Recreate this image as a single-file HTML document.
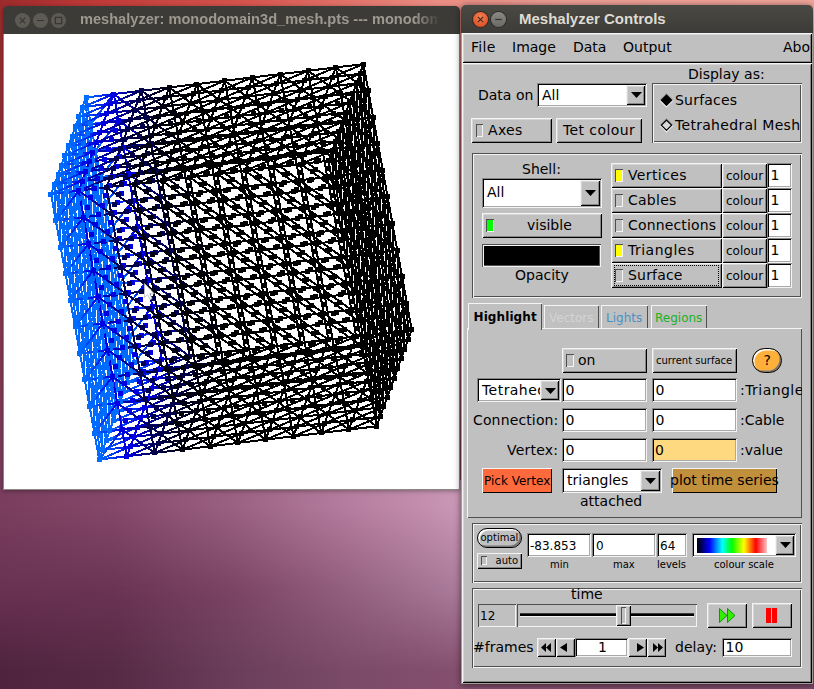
<!DOCTYPE html><html><head><meta charset="utf-8"><title>Meshalyzer</title><style>
html,body{margin:0;padding:0}
body{width:814px;height:689px;overflow:hidden;position:relative;font-family:"DejaVu Sans","Liberation Sans",sans-serif;font-size:14px;
background:linear-gradient(90deg,#9c2a2c 0px,#c03a38 100px,#d4554e 250px,#ea8d83 440px,#f0a097 560px,#f4a69a 814px)}
div,span,svg{position:absolute;box-sizing:border-box}
.t{white-space:nowrap;line-height:normal}
.a{overflow:visible}
.up{background:#c0c0c0;box-shadow:inset 1px 1px 0 #f4f4f4,inset -1px -1px 0 #000,inset 2px 2px 0 #d5d5d5,inset -2px -2px 0 #878787}
.dn{background:#fff;box-shadow:inset 1px 1px 0 #878787,inset -1px -1px 0 #f4f4f4,inset 2px 2px 0 #000,inset -2px -2px 0 #a9a9a9}
.eng{box-shadow:inset 1px 1px 0 #4f4f4f,inset -1px -1px 0 #f4f4f4,inset 2px 2px 0 #f4f4f4,inset -2px -2px 0 #4f4f4f}
.tup{background:#c0c0c0;box-shadow:inset 1px 1px 0 #f4f4f4,inset -1px -1px 0 #4f4f4f}
.tdn{background:#c0c0c0;box-shadow:inset 1px 1px 0 #4f4f4f,inset -1px -1px 0 #f4f4f4}
.clip{overflow:hidden}
.tb{background:#3c3b37;border-radius:5px 5px 0 0}
.tt{font-family:"Liberation Sans","DejaVu Sans",sans-serif;font-weight:bold;font-size:15px;white-space:nowrap;line-height:17px}
.cb{border-radius:50%}
</style></head><body><div style="left:0;top:0;width:814px;height:689px;background:linear-gradient(180deg,rgba(142,58,78,0) 0px,rgba(142,58,78,0) 10px,rgba(142,58,78,.9) 250px,#7a3d5e 490px,#4f233e 689px)"></div>
<div style="left:0;top:480px;width:461px;height:209px;background:linear-gradient(90deg,#4f233e 0%,#562a45 25%,#6a3e5b 50%,#7a4a68 75%,#85506f 100%)"></div>
<div style="left:0;top:480px;width:461px;height:209px;background:linear-gradient(90deg,#693253 0%,#6a3454 25%,#7a4464 50%,#93607f 75%,#ab7c9b 100%);-webkit-mask-image:linear-gradient(180deg,#000 110px,transparent 192px);mask-image:linear-gradient(180deg,#000 110px,transparent 192px)"></div>
<div style="left:0;top:480px;width:461px;height:209px;background:linear-gradient(90deg,#7a3d5e 0%,#85486a 25%,#9a6082 50%,#b47c9e 75%,#cb98b7 100%);-webkit-mask-image:linear-gradient(180deg,#000 27px,transparent 110px);mask-image:linear-gradient(180deg,#000 27px,transparent 110px)"></div>
<div style="left:461px;top:480px;width:353px;height:209px;background:linear-gradient(90deg,#85506f,#7d4a69)"></div>
<div style="left:3px;top:6px;width:457px;height:484px;border-radius:5px 5px 0 0;box-shadow:0 1px 4px rgba(0,0,0,.35)"></div>
<div class="tb" style="left:3px;top:6px;width:457px;height:28px;"></div>
<div style="left:3px;top:34px;width:457px;height:456px;background:#fff;border:1px solid #8a8a84;border-top:none"></div>
<div class="cb" style="left:15px;top:13px;width:15px;height:15px;background:#5d5a54"></div>
<div class="cb" style="left:33px;top:13px;width:15px;height:15px;background:#5d5a54"></div>
<div class="cb" style="left:51px;top:13px;width:15px;height:15px;background:#5d5a54"></div>
<svg class="a" style="left:0;top:0" width="80" height="34"><g stroke="#35342f" stroke-width="1.15" fill="none"><path d="M19.7 17.7l5.6 5.6M25.3 17.7l-5.6 5.6M37.2 20.5h6.6"/><rect x="55.3" y="17.3" width="6.4" height="6.4"/></g></svg>
<div class="tt clip" style="font-size:14.6px;left:80px;top:11px;width:362px;height:20px;color:#9d998f;-webkit-mask-image:linear-gradient(90deg,#000 335px,transparent 360px);mask-image:linear-gradient(90deg,#000 335px,transparent 360px)">meshalyzer: monodomain3d_mesh.pts --- monodomain3d</div>
<svg style="left:0;top:0" width="460" height="490"><g fill="none" stroke-width="2" shape-rendering="crispEdges"><path d="M65.5 273.7L64.1 237.5M81.6 189.2L86.5 215.7M99.2 459.6L97.9 423.4M54.5 184.3L58.0 174.7M118.9 365.4L123.7 392.0M123.7 392.0L127.2 382.3M77.3 280.9L76.0 244.7M90.0 206.1L93.5 196.4M65.0 155.4L68.5 145.7M89.1 288.2L93.9 314.7M127.2 382.3L130.7 372.7M120.2 401.6L118.9 365.4M93.5 196.4L98.3 223.0M64.1 237.5L62.8 201.2M96.1 268.8L99.6 259.2M87.8 251.9L92.6 278.5M79.9 353.4L84.7 379.9M111.9 384.7L110.6 348.5M80.3 152.9L79.0 116.7M114.1 338.9L118.9 365.4M92.6 278.5L91.3 242.3M90.8 124.0L95.6 150.5M106.2 440.3L104.9 404.1M83.8 143.3L82.5 107.1M102.2 331.6L105.7 322.0M94.8 232.6L93.5 196.4M107.1 358.2L105.7 322.0M83.0 225.4L87.8 251.9M93.1 396.8L91.7 360.6M116.2 293.0L114.9 256.8M125.9 346.1L129.4 336.4M84.3 261.6L89.1 288.2M86.0 97.4L90.8 124.0M103.1 249.5L106.6 239.9M98.7 341.3L102.2 331.6M85.1 179.5L88.6 169.8M109.7 430.6L113.2 421.0M115.4 375.1L114.1 338.9M97.4 305.1L100.9 295.4M83.4 343.7L86.9 334.0M118.9 365.4L122.4 355.8M85.6 297.8L90.4 324.4M88.6 169.8L92.1 160.2M75.1 326.8L79.9 353.4M74.6 208.5L78.1 198.8M79.5 235.0L84.3 261.6M79.9 353.4L83.4 343.7M102.7 449.9L101.4 413.7M78.6 317.1L82.1 307.5M55.8 220.6L54.5 184.3M100.1 377.5L98.7 341.3M87.8 251.9L86.5 215.7M101.4 413.7L106.2 440.3M72.5 254.4L76.0 244.7M111.4 266.4L110.1 230.2M83.8 143.3L88.6 169.8M111.9 384.7L116.7 411.3M112.7 302.6L116.2 293.0M85.1 179.5L83.8 143.3M80.8 271.3L85.6 297.8M118.9 365.4L117.6 329.2M99.6 259.2L104.4 285.7M114.9 256.8L119.7 283.3M113.2 421.0L111.9 384.7M104.4 285.7L109.2 312.3M89.1 288.2L92.6 278.5M101.8 213.3L105.3 203.6M75.5 126.4L79.0 116.7M83.4 343.7L88.2 370.3M62.8 201.2L67.6 227.8M98.3 223.0L101.8 213.3M106.6 239.9L105.3 203.6M93.5 196.4L97.0 186.7M107.1 358.2L111.9 384.7M76.0 244.7L80.8 271.3M114.1 338.9L112.7 302.6M115.4 375.1L120.2 401.6M75.1 326.8L78.6 317.1M100.9 295.4L104.4 285.7M69.0 264.0L72.5 254.4M104.4 285.7L107.9 276.1M116.2 293.0L121.1 319.5M109.2 312.3L114.1 338.9M102.2 331.6L107.1 358.2M103.6 367.8L107.1 358.2M69.8 181.9L73.3 172.3M65.5 273.7L69.0 264.0M117.6 329.2L116.2 293.0M80.8 271.3L84.3 261.6M97.9 423.4L96.6 387.2M85.6 297.8L84.3 261.6M90.4 324.4L95.2 350.9M84.7 379.9L89.6 406.5M97.0 186.7L95.6 150.5M92.1 160.2L95.6 150.5M96.6 387.2L100.1 377.5M62.8 201.2L66.3 191.6M79.5 235.0L83.0 225.4M58.0 174.7L61.5 165.0M111.4 266.4L116.2 293.0M72.5 254.4L77.3 280.9M104.9 404.1L109.7 430.6M97.4 305.1L102.2 331.6M76.0 244.7L79.5 235.0M100.9 295.4L99.6 259.2M94.4 433.0L99.2 459.6M60.6 247.1L65.5 273.7M68.5 145.7L72.0 136.0M92.6 278.5L96.1 268.8M100.5 177.1L105.3 203.6M123.7 392.0L122.4 355.8M90.0 206.1L88.6 169.8M99.6 259.2L103.1 249.5M73.3 172.3L72.0 136.0M87.3 133.6L90.8 124.0M106.6 239.9L111.4 266.4M73.8 290.6L78.6 317.1M108.4 394.4L107.1 358.2M86.9 334.0L85.6 297.8M122.4 355.8L125.9 346.1M75.5 126.4L80.3 152.9M121.1 319.5L124.6 309.9M91.3 242.3L94.8 232.6M107.9 276.1L112.7 302.6M127.2 382.3L125.9 346.1M90.4 324.4L93.9 314.7M76.8 162.6L81.6 189.2M96.1 268.8L94.8 232.6M84.7 379.9L88.2 370.3M89.6 406.5L88.2 370.3M95.2 350.9L100.1 377.5M110.6 348.5L115.4 375.1M96.6 387.2L95.2 350.9M109.2 312.3L112.7 302.6M67.6 227.8L72.5 254.4M79.0 116.7L82.5 107.1M94.4 433.0L97.9 423.4M102.2 331.6L100.9 295.4M76.0 244.7L74.6 208.5M69.0 264.0L73.8 290.6M71.1 218.1L74.6 208.5M117.6 329.2L122.4 355.8M78.1 198.8L81.6 189.2M82.5 107.1L86.0 97.4M101.8 213.3L106.6 239.9M125.9 346.1L124.6 309.9M87.3 133.6L86.0 97.4M93.9 314.7L97.4 305.1M98.7 341.3L97.4 305.1M103.1 249.5L101.8 213.3M104.9 404.1L108.4 394.4M84.7 379.9L83.4 343.7M66.3 191.6L69.8 181.9M82.1 307.5L86.9 334.0M81.6 189.2L85.1 179.5M73.3 172.3L78.1 198.8M109.7 430.6L108.4 394.4M83.4 343.7L82.1 307.5M70.3 300.2L75.1 326.8M97.0 186.7L101.8 213.3M86.5 215.7L90.0 206.1M59.3 210.9L62.8 201.2M96.6 387.2L101.4 413.7M108.4 394.4L113.2 421.0M130.7 372.7L134.2 363.0M73.8 290.6L77.3 280.9M105.7 322.0L104.4 285.7M95.2 350.9L98.7 341.3M78.6 317.1L77.3 280.9M102.7 449.9L106.2 440.3M65.5 273.7L70.3 300.2M97.4 305.1L96.1 268.8M93.9 314.7L92.6 278.5M88.6 169.8L87.3 133.6M74.6 208.5L73.3 172.3M58.0 174.7L62.8 201.2M79.9 353.4L78.6 317.1M84.3 261.6L87.8 251.9M101.8 213.3L100.5 177.1M89.1 288.2L87.8 251.9M101.4 413.7L104.9 404.1M59.3 210.9L64.1 237.5M130.7 372.7L129.4 336.4M98.7 341.3L103.6 367.8M82.1 307.5L85.6 297.8M73.8 290.6L72.5 254.4M125.9 346.1L130.7 372.7M88.2 370.3L91.7 360.6M94.8 232.6L99.6 259.2M70.3 300.2L73.8 290.6M75.1 326.8L73.8 290.6M116.7 411.3L120.2 401.6M64.1 237.5L67.6 227.8M98.3 223.0L97.0 186.7M66.3 191.6L71.1 218.1M69.0 264.0L67.6 227.8M84.3 261.6L83.0 225.4M55.8 220.6L60.6 247.1M100.1 377.5L104.9 404.1M71.1 218.1L76.0 244.7M80.3 152.9L83.8 143.3M99.2 459.6L102.7 449.9M101.4 413.7L100.1 377.5M88.6 169.8L93.5 196.4M103.6 367.8L102.2 331.6M69.8 181.9L68.5 145.7M74.6 208.5L79.5 235.0M80.8 271.3L79.5 235.0M78.1 198.8L83.0 225.4M120.2 401.6L123.7 392.0M91.7 360.6L95.2 350.9M93.1 396.8L96.6 387.2M111.9 384.7L115.4 375.1M104.4 285.7L103.1 249.5M105.7 322.0L110.6 348.5M72.0 136.0L76.8 162.6M92.1 160.2L90.8 124.0M116.7 411.3L115.4 375.1M106.2 440.3L109.7 430.6M83.8 143.3L87.3 133.6M112.7 302.6L117.6 329.2M115.4 375.1L118.9 365.4M85.1 179.5L90.0 206.1M94.8 232.6L98.3 223.0M107.1 358.2L110.6 348.5M99.6 259.2L98.3 223.0M116.2 293.0L119.7 283.3M110.1 230.2L114.9 256.8M121.1 319.5L119.7 283.3M62.8 201.2L61.5 165.0M88.2 370.3L93.1 396.8M98.3 223.0L103.1 249.5M60.6 247.1L64.1 237.5M55.8 220.6L59.3 210.9M100.1 377.5L103.6 367.8M109.2 312.3L107.9 276.1M89.6 406.5L93.1 396.8M64.1 237.5L69.0 264.0M103.6 367.8L108.4 394.4M111.4 266.4L114.9 256.8M97.9 423.4L102.7 449.9M122.4 355.8L121.1 319.5M71.1 218.1L69.8 181.9M86.5 215.7L85.1 179.5M91.3 242.3L90.0 206.1M90.4 324.4L89.1 288.2M78.1 198.8L76.8 162.6M100.9 295.4L105.7 322.0M105.3 203.6L110.1 230.2M80.3 152.9L85.1 179.5M67.6 227.8L71.1 218.1M124.6 309.9L129.4 336.4M61.5 165.0L65.0 155.4M87.8 251.9L91.3 242.3M72.5 254.4L71.1 218.1M77.3 280.9L82.1 307.5M104.9 404.1L103.6 367.8M93.1 396.8L97.9 423.4M51.0 194.0L54.5 184.3M54.5 184.3L59.3 210.9M69.8 181.9L74.6 208.5M94.4 433.0L93.1 396.8M60.6 247.1L59.3 210.9M59.3 210.9L58.0 174.7M91.7 360.6L96.6 387.2M96.1 268.8L100.9 295.4M83.0 225.4L86.5 215.7M113.2 421.0L116.7 411.3M119.7 283.3L124.6 309.9M93.5 196.4L92.1 160.2M107.9 276.1L111.4 266.4M106.6 239.9L110.1 230.2M65.0 155.4L69.8 181.9M76.8 162.6L80.3 152.9M68.5 145.7L73.3 172.3M112.7 302.6L111.4 266.4M92.6 278.5L97.4 305.1M95.2 350.9L93.9 314.7M66.3 191.6L65.0 155.4M81.6 189.2L80.3 152.9M87.3 133.6L92.1 160.2M110.6 348.5L114.1 338.9M105.7 322.0L109.2 312.3M67.6 227.8L66.3 191.6M72.0 136.0L75.5 126.4M114.1 338.9L117.6 329.2M95.6 150.5L100.5 177.1M121.1 319.5L125.9 346.1M92.1 160.2L97.0 186.7M90.0 206.1L94.8 232.6M129.4 336.4L134.2 363.0M122.4 355.8L127.2 382.3M86.9 334.0L91.7 360.6M91.3 242.3L96.1 268.8M103.1 249.5L107.9 276.1M97.9 423.4L101.4 413.7M83.0 225.4L81.6 189.2M97.0 186.7L100.5 177.1M89.6 406.5L94.4 433.0M77.3 280.9L80.8 271.3M107.9 276.1L106.6 239.9M82.1 307.5L80.8 271.3M76.8 162.6L75.5 126.4M79.0 116.7L83.8 143.3M82.5 107.1L87.3 133.6M117.6 329.2L121.1 319.5M88.2 370.3L86.9 334.0M70.3 300.2L69.0 264.0M110.6 348.5L109.2 312.3M86.5 215.7L91.3 242.3M85.6 297.8L89.1 288.2M73.3 172.3L76.8 162.6M79.5 235.0L78.1 198.8M108.4 394.4L111.9 384.7M86.9 334.0L90.4 324.4M61.5 165.0L66.3 191.6M78.6 317.1L83.4 343.7M93.9 314.7L98.7 341.3M91.7 360.6L90.4 324.4M51.0 194.0L55.8 220.6" stroke="#006bff"/><path d="M54.5 184.3L61.4 183.5M65.5 273.7L72.4 272.8M114.9 256.8L121.9 255.9M119.7 283.3L125.5 275.8M129.4 336.4L136.3 335.6M120.2 401.6L128.0 398.4M123.7 392.0L131.5 388.7M94.4 433.0L101.3 432.2M95.6 150.5L101.4 143.0M60.6 247.1L67.6 246.3M55.8 220.6L62.8 219.7M99.2 459.6L107.0 456.4M65.0 155.4L72.8 152.1M68.5 145.7L76.3 142.5M84.7 379.9L90.5 372.4M86.0 97.4L92.9 96.6M79.9 353.4L85.7 345.9M102.7 449.9L110.5 446.7M105.3 203.6L111.0 196.2M113.2 421.0L121.0 417.7M124.6 309.9L130.3 302.4M72.0 136.0L79.8 132.8M99.2 459.6L106.1 458.8M127.2 382.3L134.1 381.5M70.3 300.2L76.0 292.8M58.0 174.7L64.9 173.8M68.5 145.7L75.4 144.9M65.5 273.7L71.2 266.2M129.4 336.4L135.1 329.0M99.2 459.6L104.9 452.1M114.9 256.8L120.7 249.3M54.5 184.3L62.3 181.1M82.5 107.1L89.4 106.2M127.2 382.3L135.0 379.1M61.5 165.0L68.4 164.2M89.6 406.5L96.5 405.6M82.5 107.1L90.3 103.8M100.5 177.1L107.4 176.2M51.0 194.0L57.9 193.2M130.7 372.7L137.6 371.8M113.2 421.0L120.1 420.1M102.7 449.9L109.6 449.1M90.8 124.0L96.6 116.5M94.4 433.0L100.1 425.6M60.6 247.1L66.4 239.6M79.0 116.7L86.8 113.5M109.7 430.6L117.5 427.4M110.1 230.2L117.0 229.4M75.5 126.4L83.3 123.1M61.5 165.0L69.3 161.8M51.0 194.0L58.8 190.8M116.7 411.3L123.6 410.5M123.7 392.0L130.6 391.1M120.2 401.6L127.1 400.8M106.2 440.3L113.1 439.4M79.0 116.7L85.9 115.9M65.0 155.4L71.9 154.5M134.2 363.0L141.1 362.2M95.6 150.5L102.6 149.7M116.7 411.3L124.5 408.1M58.0 174.7L65.8 171.4M109.7 430.6L116.6 429.8M106.2 440.3L114.0 437.0M134.2 363.0L139.9 355.5M55.8 220.6L61.6 213.1M84.7 379.9L91.7 379.1M89.6 406.5L95.3 399.0M79.9 353.4L86.9 352.5M75.5 126.4L82.4 125.5M124.6 309.9L131.5 309.0M72.0 136.0L78.9 135.2M100.5 177.1L106.2 169.6M90.8 124.0L97.8 123.1M75.1 326.8L82.0 326.0M105.3 203.6L112.2 202.8M110.1 230.2L115.8 222.7M130.7 372.7L138.5 369.4M119.7 283.3L126.7 282.5M70.3 300.2L77.2 299.4M75.1 326.8L80.8 319.3" stroke="#005efb"/><path d="M61.4 183.5L68.4 182.7M72.4 272.8L79.3 272.0M121.9 255.9L128.8 255.1M125.5 275.8L131.2 268.4M136.3 335.6L143.3 334.8M128.0 398.4L135.8 395.1M131.5 388.7L139.3 385.5M101.3 432.2L108.3 431.4M101.4 143.0L107.1 135.6M67.6 246.3L74.5 245.5M62.8 219.7L69.7 218.9M107.0 456.4L114.8 453.1M72.8 152.1L80.6 148.9M76.3 142.5L84.1 139.2M90.5 372.4L96.2 365.0M92.9 96.6L99.9 95.7M85.7 345.9L91.4 338.4M110.5 446.7L118.3 443.4M111.0 196.2L116.7 188.7M121.0 417.7L128.8 414.5M130.3 302.4L136.0 294.9M79.8 132.8L87.6 129.5M106.1 458.8L113.1 457.9M134.1 381.5L141.1 380.7M76.0 292.8L81.7 285.3M64.9 173.8L71.9 173.0M75.4 144.9L82.4 144.0M71.2 266.2L76.9 258.7M135.1 329.0L140.8 321.5M104.9 452.1L110.7 444.7M120.7 249.3L126.4 241.8M62.3 181.1L70.1 177.8M89.4 106.2L96.4 105.4M135.0 379.1L142.8 375.8M68.4 164.2L75.4 163.4M96.5 405.6L103.4 404.8M90.3 103.8L98.1 100.6M107.4 176.2L114.3 175.4M57.9 193.2L64.9 192.3M137.6 371.8L144.6 371.0M120.1 420.1L127.1 419.3M109.6 449.1L116.6 448.3M96.6 116.5L102.3 109.0M100.1 425.6L105.8 418.1M66.4 239.6L72.1 232.2M86.8 113.5L94.6 110.2M117.5 427.4L125.3 424.1M117.0 229.4L124.0 228.5M83.3 123.1L91.1 119.9M69.3 161.8L77.1 158.5M58.8 190.8L66.6 187.5M123.6 410.5L130.6 409.6M130.6 391.1L137.6 390.3M127.1 400.8L134.1 400.0M113.1 439.4L120.1 438.6M85.9 115.9L92.9 115.1M71.9 154.5L78.9 153.7M141.1 362.2L148.1 361.3M102.6 149.7L109.5 148.9M124.5 408.1L132.3 404.8M65.8 171.4L73.6 168.2M116.6 429.8L123.6 429.0M114.0 437.0L121.8 433.8M139.9 355.5L145.7 348.1M61.6 213.1L67.3 205.6M91.7 379.1L98.6 378.3M95.3 399.0L101.0 391.5M86.9 352.5L93.8 351.7M82.4 125.5L89.4 124.7M131.5 309.0L138.4 308.2M78.9 135.2L85.9 134.4M106.2 169.6L111.9 162.1M97.8 123.1L104.7 122.3M82.0 326.0L89.0 325.1M112.2 202.8L119.2 202.0M115.8 222.7L121.6 215.3M138.5 369.4L146.3 366.2M126.7 282.5L133.6 281.7M77.2 299.4L84.2 298.6M80.8 319.3L86.6 311.9" stroke="#0043f4"/><path d="M68.4 182.7L75.3 181.8M79.3 272.0L86.3 271.2M128.8 255.1L135.7 254.3M131.2 268.4L136.9 260.9M143.3 334.8L150.2 333.9M135.8 395.1L143.6 391.9M139.3 385.5L147.1 382.2M108.3 431.4L115.2 430.5M107.1 135.6L112.8 128.1M74.5 245.5L81.5 244.6M69.7 218.9L76.6 218.1M114.8 453.1L122.6 449.9M80.6 148.9L88.4 145.6M84.1 139.2L91.9 136.0M96.2 365.0L101.9 357.5M99.9 95.7L106.8 94.9M91.4 338.4L97.1 330.9M118.3 443.4L126.1 440.2M116.7 188.7L122.5 181.2M128.8 414.5L136.6 411.2M136.0 294.9L141.8 287.5M87.6 129.5L95.4 126.3M113.1 457.9L120.0 457.1M141.1 380.7L148.0 379.8M81.7 285.3L87.5 277.8M71.9 173.0L78.8 172.2M82.4 144.0L89.3 143.2M76.9 258.7L82.7 251.3M140.8 321.5L146.6 314.0M110.7 444.7L116.4 437.2M126.4 241.8L132.1 234.3M70.1 177.8L77.9 174.6M96.4 105.4L103.3 104.6M142.8 375.8L150.6 372.6M75.4 163.4L82.3 162.5M103.4 404.8L110.4 404.0M98.1 100.6L105.9 97.3M114.3 175.4L121.3 174.6M64.9 192.3L71.8 191.5M144.6 371.0L151.5 370.2M127.1 419.3L134.0 418.5M116.6 448.3L123.5 447.4M102.3 109.0L108.0 101.5M105.8 418.1L111.6 410.6M72.1 232.2L77.8 224.7M94.6 110.2L102.4 107.0M125.3 424.1L133.1 420.9M124.0 228.5L130.9 227.7M91.1 119.9L98.9 116.6M77.1 158.5L84.9 155.3M66.6 187.5L74.4 184.3M130.6 409.6L137.5 408.8M137.6 390.3L144.5 389.5M134.1 400.0L141.0 399.1M120.1 438.6L127.0 437.8M92.9 115.1L99.8 114.2M78.9 153.7L85.8 152.9M148.1 361.3L155.0 360.5M109.5 148.9L116.5 148.0M132.3 404.8L140.1 401.6M73.6 168.2L81.4 164.9M123.6 429.0L130.5 428.1M121.8 433.8L129.6 430.5M145.7 348.1L151.4 340.6M67.3 205.6L73.0 198.1M98.6 378.3L105.6 377.4M101.0 391.5L106.8 384.1M93.8 351.7L100.7 350.9M89.4 124.7L96.3 123.9M138.4 308.2L145.4 307.4M85.9 134.4L92.8 133.5M111.9 162.1L117.7 154.7M104.7 122.3L111.6 121.5M89.0 325.1L95.9 324.3M119.2 202.0L126.1 201.1M121.6 215.3L127.3 207.8M146.3 366.2L154.1 362.9M133.6 281.7L140.6 280.8M84.2 298.6L91.1 297.7M86.6 311.9L92.3 304.4" stroke="#0028ec"/><path d="M75.3 181.8L82.2 181.0M86.3 271.2L93.2 270.4M135.7 254.3L142.7 253.4M136.9 260.9L142.7 253.4M150.2 333.9L157.1 333.1M143.6 391.9L151.4 388.6M147.1 382.2L154.9 379.0M115.2 430.5L122.1 429.7M112.8 128.1L118.6 120.6M81.5 244.6L88.4 243.8M76.6 218.1L83.6 217.2M122.6 449.9L130.4 446.6M88.4 145.6L96.2 142.4M91.9 136.0L99.8 132.7M101.9 357.5L107.7 350.0M106.8 94.9L113.8 94.1M97.1 330.9L102.8 323.5M126.1 440.2L133.9 436.9M122.5 181.2L128.2 173.8M136.6 411.2L144.4 408.0M141.8 287.5L147.5 280.0M95.4 126.3L103.2 123.1M120.0 457.1L127.0 456.3M148.0 379.8L154.9 379.0M87.5 277.8L93.2 270.4M78.8 172.2L85.8 171.3M89.3 143.2L96.2 142.4M82.7 251.3L88.4 243.8M146.6 314.0L152.3 306.6M116.4 437.2L122.1 429.7M132.1 234.3L137.8 226.9M77.9 174.6L85.8 171.3M103.3 104.6L110.2 103.7M150.6 372.6L158.4 369.3M82.3 162.5L89.2 161.7M110.4 404.0L117.3 403.1M105.9 97.3L113.8 94.1M121.3 174.6L128.2 173.8M71.8 191.5L78.8 190.7M151.5 370.2L158.4 369.3M134.0 418.5L140.9 417.6M123.5 447.4L130.4 446.6M108.0 101.5L113.8 94.1M111.6 410.6L117.3 403.1M77.8 224.7L83.6 217.2M102.4 107.0L110.2 103.7M133.1 420.9L140.9 417.6M130.9 227.7L137.8 226.9M98.9 116.6L106.8 113.4M84.9 155.3L92.8 152.0M74.4 184.3L82.2 181.0M137.5 408.8L144.4 408.0M144.5 389.5L151.4 388.6M141.0 399.1L147.9 398.3M127.0 437.8L133.9 436.9M99.8 114.2L106.8 113.4M85.8 152.9L92.8 152.0M155.0 360.5L161.9 359.7M116.5 148.0L123.4 147.2M140.1 401.6L147.9 398.3M81.4 164.9L89.2 161.7M130.5 428.1L137.4 427.3M129.6 430.5L137.4 427.3M151.4 340.6L157.1 333.1M73.0 198.1L78.8 190.7M105.6 377.4L112.5 376.6M106.8 384.1L112.5 376.6M100.7 350.9L107.7 350.0M96.3 123.9L103.2 123.1M145.4 307.4L152.3 306.6M92.8 133.5L99.8 132.7M117.7 154.7L123.4 147.2M111.6 121.5L118.6 120.6M95.9 324.3L102.8 323.5M126.1 201.1L133.0 200.3M127.3 207.8L133.0 200.3M154.1 362.9L161.9 359.7M140.6 280.8L147.5 280.0M91.1 297.7L98.0 296.9M92.3 304.4L98.0 296.9" stroke="#000de5"/><path d="M96.2 142.4L99.8 132.7M118.6 120.6L123.4 147.2M88.4 243.8L93.2 270.4M147.5 280.0L152.3 306.6M142.7 253.4L147.5 280.0M78.8 190.7L82.2 181.0M82.2 181.0L85.8 171.3M147.9 398.3L151.4 388.6M137.8 226.9L142.7 253.4M106.8 113.4L110.2 103.7M130.4 446.6L133.9 436.9M154.9 379.0L158.4 369.3M133.0 200.3L137.8 226.9M133.9 436.9L137.4 427.3M98.0 296.9L102.8 323.5M99.8 132.7L103.2 123.1M93.2 270.4L98.0 296.9M152.3 306.6L157.1 333.1M151.4 388.6L154.9 379.0M107.7 350.0L112.5 376.6M144.4 408.0L147.9 398.3M122.1 429.7L127.0 456.3M83.6 217.2L88.4 243.8M117.3 403.1L122.1 429.7M158.4 369.3L161.9 359.7M128.2 173.8L133.0 200.3M123.4 147.2L128.2 173.8M157.1 333.1L161.9 359.7M137.4 427.3L140.9 417.6M127.0 456.3L130.4 446.6M78.8 190.7L83.6 217.2M110.2 103.7L113.8 94.1M85.8 171.3L89.2 161.7M140.9 417.6L144.4 408.0M113.8 94.1L118.6 120.6M102.8 323.5L107.7 350.0M103.2 123.1L106.8 113.4M89.2 161.7L92.8 152.0M92.8 152.0L96.2 142.4M112.5 376.6L117.3 403.1" stroke="#0000e1"/><path d="M99.8 132.7L107.6 129.5M93.2 270.4L101.4 276.2M137.4 427.3L145.3 424.0M113.8 94.1L121.9 99.9M147.5 280.0L155.6 285.8M151.4 388.6L158.4 387.8M152.3 306.6L159.2 305.7M130.4 446.6L137.4 445.8M144.4 408.0L152.3 404.7M140.9 417.6L148.8 414.4M102.8 323.5L111.0 329.3M158.4 369.3L165.4 368.5M107.7 350.0L114.6 349.2M82.2 181.0L90.1 177.8M127.0 456.3L133.9 455.4M133.9 436.9L140.9 436.1M130.4 446.6L138.3 443.4M103.2 123.1L111.1 119.8M83.6 217.2L90.5 216.4M118.6 120.6L125.5 119.8M127.0 456.3L134.8 453.0M85.8 171.3L92.7 170.5M82.2 181.0L89.2 180.2M85.8 171.3L93.6 168.1M98.0 296.9L105.0 296.1M140.9 417.6L147.9 416.8M89.2 161.7L96.2 160.9M93.2 270.4L100.1 269.5M113.8 94.1L120.7 93.2M147.5 280.0L154.4 279.2M96.2 142.4L103.2 141.5M137.8 226.9L146.0 232.7M142.7 253.4L149.6 252.6M89.2 161.7L97.1 158.4M112.5 376.6L120.6 382.4M92.8 152.0L100.6 148.8M158.4 369.3L166.3 366.1M133.0 200.3L141.2 206.1M117.3 403.1L124.2 402.3M147.9 398.3L155.8 395.1M102.8 323.5L109.8 322.6M96.2 142.4L104.1 139.1M154.9 379.0L162.8 375.7M128.2 173.8L136.4 179.6M133.0 200.3L140.0 199.5M123.4 147.2L131.5 153.0M88.4 243.8L96.5 249.6M133.9 436.9L141.8 433.7M110.2 103.7L117.2 102.9M118.6 120.6L126.7 126.4M78.8 190.7L85.7 189.8M147.9 398.3L154.9 397.5M106.8 113.4L113.7 112.6M123.4 147.2L130.3 146.4M88.4 243.8L95.3 243.0M98.0 296.9L106.2 302.7M110.2 103.7L118.1 100.5M154.9 379.0L161.9 378.2M152.3 306.6L160.5 312.4M144.4 408.0L151.4 407.1M92.8 152.0L99.7 151.2M78.8 190.7L86.6 187.4M151.4 388.6L159.3 385.4M142.7 253.4L150.8 259.2M103.2 123.1L110.2 122.2M107.7 350.0L115.8 355.8M106.8 113.4L114.6 110.1M137.8 226.9L144.8 226.0M122.1 429.7L130.3 435.5M83.6 217.2L91.7 223.0M117.3 403.1L125.5 409.0M99.8 132.7L106.7 131.9M137.4 427.3L144.4 426.5M157.1 333.1L165.3 338.9M112.5 376.6L119.4 375.8M128.2 173.8L135.1 172.9M122.1 429.7L129.1 428.9M161.9 359.7L168.9 358.8M157.1 333.1L164.1 332.3M78.8 190.7L86.9 196.5" stroke="#0000ce"/><path d="M107.6 129.5L115.4 126.2M101.4 276.2L109.5 282.0M145.3 424.0L153.1 420.8M121.9 99.9L130.0 105.7M155.6 285.8L163.8 291.6M158.4 387.8L165.3 387.0M159.2 305.7L166.2 304.9M137.4 445.8L144.3 444.9M152.3 404.7L160.1 401.5M148.8 414.4L156.6 411.1M111.0 329.3L119.1 335.1M165.4 368.5L172.3 367.7M114.6 349.2L121.5 348.4M90.1 177.8L97.9 174.5M133.9 455.4L140.8 454.6M140.9 436.1L147.8 435.3M138.3 443.4L146.1 440.1M111.1 119.8L118.9 116.6M90.5 216.4L97.4 215.6M125.5 119.8L132.4 119.0M134.8 453.0L142.6 449.8M92.7 170.5L99.6 169.7M89.2 180.2L96.1 179.3M93.6 168.1L101.4 164.9M105.0 296.1L111.9 295.2M147.9 416.8L154.8 416.0M96.2 160.9L103.1 160.0M100.1 269.5L107.1 268.7M120.7 93.2L127.6 92.4M154.4 279.2L161.4 278.3M103.2 141.5L110.1 140.7M146.0 232.7L154.1 238.5M149.6 252.6L156.5 251.8M97.1 158.4L104.9 155.2M120.6 382.4L128.8 388.2M100.6 148.8L108.4 145.5M166.3 366.1L174.1 362.8M141.2 206.1L149.3 211.9M124.2 402.3L131.2 401.5M155.8 395.1L163.6 391.8M109.8 322.6L116.7 321.8M104.1 139.1L111.9 135.9M162.8 375.7L170.6 372.5M136.4 179.6L144.5 185.4M140.0 199.5L146.9 198.6M131.5 153.0L139.7 158.8M96.5 249.6L104.7 255.4M141.8 433.7L149.6 430.5M117.2 102.9L124.1 102.1M126.7 126.4L134.9 132.2M85.7 189.8L92.6 189.0M154.9 397.5L161.8 396.6M113.7 112.6L120.6 111.7M130.3 146.4L137.3 145.5M95.3 243.0L102.3 242.1M106.2 302.7L114.3 308.5M118.1 100.5L125.9 97.2M161.9 378.2L168.8 377.3M160.5 312.4L168.6 318.2M151.4 407.1L158.3 406.3M99.7 151.2L106.6 150.4M86.6 187.4L94.4 184.2M159.3 385.4L167.1 382.2M150.8 259.2L159.0 265.0M110.2 122.2L117.1 121.4M115.8 355.8L124.0 361.6M114.6 110.1L122.4 106.9M144.8 226.0L151.7 225.2M130.3 435.5L138.4 441.3M91.7 223.0L99.9 228.8M125.5 409.0L133.6 414.8M106.7 131.9L113.6 131.0M144.4 426.5L151.3 425.6M165.3 338.9L173.4 344.7M119.4 375.8L126.4 374.9M135.1 172.9L142.1 172.1M129.1 428.9L136.0 428.0M168.9 358.8L175.8 358.0M164.1 332.3L171.0 331.4M86.9 196.5L95.0 202.3" stroke="#0000a9"/><path d="M115.4 126.2L123.2 123.0M109.5 282.0L117.6 287.8M153.1 420.8L160.9 417.5M130.0 105.7L138.2 111.5M163.8 291.6L171.9 297.4M165.3 387.0L172.3 386.2M166.2 304.9L173.1 304.1M144.3 444.9L151.3 444.1M160.1 401.5L167.9 398.2M156.6 411.1L164.4 407.9M119.1 335.1L127.3 340.9M172.3 367.7L179.3 366.8M121.5 348.4L128.5 347.5M97.9 174.5L105.7 171.3M140.8 454.6L147.8 453.8M147.8 435.3L154.8 434.5M146.1 440.1L153.9 436.9M118.9 116.6L126.7 113.3M97.4 215.6L104.4 214.7M132.4 119.0L139.4 118.1M142.6 449.8L150.4 446.5M99.6 169.7L106.6 168.9M96.1 179.3L103.1 178.5M101.4 164.9L109.2 161.6M111.9 295.2L118.8 294.4M154.8 416.0L161.8 415.1M103.1 160.0L110.1 159.2M107.1 268.7L114.0 267.9M127.6 92.4L134.6 91.6M161.4 278.3L168.3 277.5M110.1 140.7L117.1 139.9M154.1 238.5L162.3 244.3M156.5 251.8L163.5 250.9M104.9 155.2L112.7 151.9M128.8 388.2L136.9 394.0M108.4 145.5L116.2 142.3M174.1 362.8L181.9 359.6M149.3 211.9L157.5 217.7M131.2 401.5L138.1 400.7M163.6 391.8L171.4 388.6M116.7 321.8L123.7 321.0M111.9 135.9L119.7 132.6M170.6 372.5L178.4 369.2M144.5 185.4L152.6 191.2M146.9 198.6L153.8 197.8M139.7 158.8L147.8 164.6M104.7 255.4L112.8 261.2M149.6 430.5L157.4 427.2M124.1 102.1L131.1 101.2M134.9 132.2L143.0 138.1M92.6 189.0L99.6 188.2M161.8 396.6L168.8 395.8M120.6 111.7L127.6 110.9M137.3 145.5L144.2 144.7M102.3 242.1L109.2 241.3M114.3 308.5L122.5 314.3M125.9 97.2L133.7 94.0M168.8 377.3L175.8 376.5M168.6 318.2L176.7 324.0M158.3 406.3L165.3 405.5M106.6 150.4L113.6 149.5M94.4 184.2L102.2 180.9M167.1 382.2L174.9 378.9M159.0 265.0L167.1 270.9M117.1 121.4L124.1 120.6M124.0 361.6L132.1 367.5M122.4 106.9L130.2 103.6M151.7 225.2L158.7 224.4M138.4 441.3L146.6 447.1M99.9 228.8L108.0 234.7M133.6 414.8L141.7 420.6M113.6 131.0L120.6 130.2M151.3 425.6L158.3 424.8M173.4 344.7L181.6 350.5M126.4 374.9L133.3 374.1M142.1 172.1L149.0 171.3M136.0 428.0L142.9 427.2M175.8 358.0L182.8 357.2M171.0 331.4L177.9 330.6M95.0 202.3L103.2 208.1" stroke="#000083"/><path d="M123.2 123.0L131.0 119.7M117.6 287.8L125.8 293.6M160.9 417.5L168.7 414.3M138.2 111.5L146.3 117.3M171.9 297.4L180.1 303.2M172.3 386.2L179.2 385.3M173.1 304.1L180.1 303.2M151.3 444.1L158.2 443.3M167.9 398.2L175.7 395.0M164.4 407.9L172.2 404.6M127.3 340.9L135.4 346.7M179.3 366.8L186.2 366.0M128.5 347.5L135.4 346.7M105.7 171.3L113.5 168.0M147.8 453.8L154.7 452.9M154.8 434.5L161.7 433.6M153.9 436.9L161.7 433.6M126.7 113.3L134.5 110.1M104.4 214.7L111.3 213.9M139.4 118.1L146.3 117.3M150.4 446.5L158.2 443.3M106.6 168.9L113.5 168.0M103.1 178.5L110.0 177.7M109.2 161.6L117.0 158.4M118.8 294.4L125.8 293.6M161.8 415.1L168.7 414.3M110.1 159.2L117.0 158.4M114.0 267.9L121.0 267.0M134.6 91.6L141.5 90.7M168.3 277.5L175.2 276.7M117.1 139.9L124.0 139.0M162.3 244.3L170.4 250.1M163.5 250.9L170.4 250.1M112.7 151.9L120.5 148.7M136.9 394.0L145.1 399.8M116.2 142.3L124.0 139.0M181.9 359.6L189.7 356.3M157.5 217.7L165.6 223.5M138.1 400.7L145.1 399.8M171.4 388.6L179.2 385.3M123.7 321.0L130.6 320.1M119.7 132.6L127.5 129.4M178.4 369.2L186.2 366.0M152.6 191.2L160.8 197.0M153.8 197.8L160.8 197.0M147.8 164.6L156.0 170.4M112.8 261.2L121.0 267.0M157.4 427.2L165.2 424.0M131.1 101.2L138.0 100.4M143.0 138.1L151.1 143.9M99.6 188.2L106.5 187.3M168.8 395.8L175.7 395.0M127.6 110.9L134.5 110.1M144.2 144.7L151.1 143.9M109.2 241.3L116.1 240.5M122.5 314.3L130.6 320.1M133.7 94.0L141.5 90.7M175.8 376.5L182.7 375.7M176.7 324.0L184.9 329.8M165.3 405.5L172.2 404.6M113.6 149.5L120.5 148.7M102.2 180.9L110.0 177.7M174.9 378.9L182.7 375.7M167.1 270.9L175.2 276.7M124.1 120.6L131.0 119.7M132.1 367.5L140.2 373.3M130.2 103.6L138.0 100.4M158.7 224.4L165.6 223.5M146.6 447.1L154.7 452.9M108.0 234.7L116.1 240.5M141.7 420.6L149.9 426.4M120.6 130.2L127.5 129.4M158.3 424.8L165.2 424.0M181.6 350.5L189.7 356.3M133.3 374.1L140.2 373.3M149.0 171.3L156.0 170.4M142.9 427.2L149.9 426.4M182.8 357.2L189.7 356.3M177.9 330.6L184.9 329.8M103.2 208.1L111.3 213.9" stroke="#00005e"/><path d="M165.2 424.0L168.7 414.3M146.3 117.3L151.1 143.9M168.7 414.3L172.2 404.6M180.1 303.2L184.9 329.8M127.5 129.4L131.0 119.7M113.5 168.0L117.0 158.4M161.7 433.6L165.2 424.0M165.6 223.5L170.4 250.1M154.7 452.9L158.2 443.3M116.1 240.5L121.0 267.0M110.0 177.7L113.5 168.0M182.7 375.7L186.2 366.0M135.4 346.7L140.2 373.3M172.2 404.6L175.7 395.0M141.5 90.7L146.3 117.3M170.4 250.1L175.2 276.7M130.6 320.1L135.4 346.7M125.8 293.6L130.6 320.1M145.1 399.8L149.9 426.4M131.0 119.7L134.5 110.1M138.0 100.4L141.5 90.7M175.7 395.0L179.2 385.3M186.2 366.0L189.7 356.3M106.5 187.3L110.0 177.7M149.9 426.4L154.7 452.9M175.2 276.7L180.1 303.2M184.9 329.8L189.7 356.3M111.3 213.9L116.1 240.5M134.5 110.1L138.0 100.4M160.8 197.0L165.6 223.5M106.5 187.3L111.3 213.9M120.5 148.7L124.0 139.0M121.0 267.0L125.8 293.6M158.2 443.3L161.7 433.6M156.0 170.4L160.8 197.0M117.0 158.4L120.5 148.7M140.2 373.3L145.1 399.8M151.1 143.9L156.0 170.4M124.0 139.0L127.5 129.4M179.2 385.3L182.7 375.7" stroke="#00004b"/><path d="M165.6 223.5L173.7 229.3M186.2 366.0L194.0 362.8M149.9 426.4L158.0 432.2M134.5 110.1L141.4 109.2M189.7 356.3L196.6 355.5M165.2 424.0L172.1 423.1M151.1 143.9L158.1 143.0M146.3 117.3L154.5 123.1M175.2 276.7L183.4 282.5M117.0 158.4L124.8 155.1M127.5 129.4L134.4 128.5M165.2 424.0L173.0 420.7M172.2 404.6L179.1 403.8M111.3 213.9L119.5 219.7M170.4 250.1L178.6 255.9M116.1 240.5L123.1 239.6M131.0 119.7L137.9 118.9M175.7 395.0L182.6 394.1M120.5 148.7L127.4 147.9M134.5 110.1L142.3 106.8M179.2 385.3L187.0 382.1M113.5 168.0L120.4 167.2M168.7 414.3L176.5 411.1M120.5 148.7L128.3 145.5M141.5 90.7L148.4 89.9M161.7 433.6L168.6 432.8M111.3 213.9L118.3 213.1M110.0 177.7L116.9 176.8M117.0 158.4L123.9 157.5M145.1 399.8L152.0 399.0M186.2 366.0L193.1 365.2M138.0 100.4L145.8 97.2M106.5 187.3L113.4 186.5M106.5 187.3L114.3 184.1M124.0 139.0L130.9 138.2M121.0 267.0L127.9 266.2M161.7 433.6L169.5 430.4M154.7 452.9L161.6 452.1M165.6 223.5L172.5 222.7M110.0 177.7L117.8 174.4M149.9 426.4L156.8 425.5M140.2 373.3L148.4 379.1M182.7 375.7L190.5 372.4M175.2 276.7L182.2 275.8M151.1 143.9L159.3 149.7M179.2 385.3L186.1 384.5M146.3 117.3L153.3 116.5M184.9 329.8L193.0 335.6M138.0 100.4L144.9 99.6M160.8 197.0L168.9 202.8M130.6 320.1L138.7 325.9M158.2 443.3L165.1 442.4M127.5 129.4L135.3 126.1M125.8 293.6L132.7 292.7M113.5 168.0L121.3 164.8M158.2 443.3L166.0 440.0M182.7 375.7L189.6 374.8M175.7 395.0L183.5 391.7M156.0 170.4L164.1 176.2M168.7 414.3L175.6 413.5M124.0 139.0L131.8 135.8M156.0 170.4L162.9 169.6M135.4 346.7L143.6 352.5M154.7 452.9L162.5 449.7M140.2 373.3L147.2 372.4M116.1 240.5L124.3 246.3M170.4 250.1L177.4 249.3M172.2 404.6L180.0 401.4M180.1 303.2L188.2 309.0M141.5 90.7L149.6 96.5M184.9 329.8L191.8 328.9M135.4 346.7L142.4 345.9M130.6 320.1L137.5 319.3M125.8 293.6L133.9 299.4M145.1 399.8L153.2 405.6M106.5 187.3L114.6 193.1M131.0 119.7L138.8 116.5M180.1 303.2L187.0 302.4M160.8 197.0L167.7 196.1M121.0 267.0L129.1 272.8" stroke="#000044"/><path d="M173.7 229.3L181.9 235.2M194.0 362.8L201.8 359.5M158.0 432.2L166.2 438.0M141.4 109.2L148.4 108.4M196.6 355.5L203.6 354.7M172.1 423.1L179.1 422.3M158.1 143.0L165.0 142.2M154.5 123.1L162.6 128.9M183.4 282.5L191.5 288.3M124.8 155.1L132.6 151.9M134.4 128.5L141.4 127.7M173.0 420.7L180.8 417.5M179.1 403.8L186.1 403.0M119.5 219.7L127.6 225.5M178.6 255.9L186.7 261.7M123.1 239.6L130.0 238.8M137.9 118.9L144.9 118.1M182.6 394.1L189.6 393.3M127.4 147.9L134.4 147.0M142.3 106.8L150.1 103.6M187.0 382.1L194.8 378.8M120.4 167.2L127.4 166.4M176.5 411.1L184.3 407.8M128.3 145.5L136.1 142.2M148.4 89.9L155.4 89.1M168.6 432.8L175.6 432.0M118.3 213.1L125.2 212.2M116.9 176.8L123.9 176.0M123.9 157.5L130.9 156.7M152.0 399.0L158.9 398.2M193.1 365.2L200.1 364.3M145.8 97.2L153.6 93.9M113.4 186.5L120.4 185.7M114.3 184.1L122.1 180.8M130.9 138.2L137.9 137.4M127.9 266.2L134.8 265.4M169.5 430.4L177.3 427.1M161.6 452.1L168.6 451.3M172.5 222.7L179.5 221.9M117.8 174.4L125.6 171.2M156.8 425.5L163.8 424.7M148.4 379.1L156.5 384.9M190.5 372.4L198.3 369.2M182.2 275.8L189.1 275.0M159.3 149.7L167.4 155.5M186.1 384.5L193.1 383.7M153.3 116.5L160.2 115.6M193.0 335.6L201.2 341.4M144.9 99.6L151.9 98.7M168.9 202.8L177.1 208.6M138.7 325.9L146.9 331.8M165.1 442.4L172.1 441.6M135.3 126.1L143.1 122.9M132.7 292.7L139.7 291.9M121.3 164.8L129.1 161.5M166.0 440.0L173.8 436.8M189.6 374.8L196.6 374.0M183.5 391.7L191.3 388.5M164.1 176.2L172.2 182.0M175.6 413.5L182.6 412.6M131.8 135.8L139.6 132.5M162.9 169.6L169.8 168.8M143.6 352.5L151.7 358.3M162.5 449.7L170.3 446.4M147.2 372.4L154.1 371.6M124.3 246.3L132.4 252.1M177.4 249.3L184.3 248.4M180.0 401.4L187.8 398.1M188.2 309.0L196.3 314.8M149.6 96.5L157.8 102.4M191.8 328.9L198.8 328.1M142.4 345.9L149.3 345.0M137.5 319.3L144.5 318.5M133.9 299.4L142.1 305.2M153.2 405.6L161.3 411.4M114.6 193.1L122.8 199.0M138.8 116.5L146.6 113.2M187.0 302.4L193.9 301.6M167.7 196.1L174.7 195.3M129.1 272.8L137.2 278.6" stroke="#000034"/><path d="M181.9 235.2L190.0 241.0M201.8 359.5L209.6 356.3M166.2 438.0L174.3 443.8M148.4 108.4L155.3 107.6M203.6 354.7L210.5 353.8M179.1 422.3L186.0 421.5M165.0 142.2L172.0 141.4M162.6 128.9L170.7 134.7M191.5 288.3L199.7 294.1M132.6 151.9L140.4 148.6M141.4 127.7L148.3 126.9M180.8 417.5L188.6 414.2M186.1 403.0L193.0 402.1M127.6 225.5L135.7 231.3M186.7 261.7L194.8 267.5M130.0 238.8L137.0 238.0M144.9 118.1L151.8 117.2M189.6 393.3L196.5 392.5M134.4 147.0L141.3 146.2M150.1 103.6L157.9 100.3M194.8 378.8L202.6 375.6M127.4 166.4L134.3 165.5M184.3 407.8L192.1 404.6M136.1 142.2L143.9 139.0M155.4 89.1L162.3 88.2M175.6 432.0L182.5 431.1M125.2 212.2L132.1 211.4M123.9 176.0L130.8 175.2M130.9 156.7L137.8 155.9M158.9 398.2L165.9 397.3M200.1 364.3L207.0 363.5M153.6 93.9L161.4 90.7M120.4 185.7L127.3 184.8M122.1 180.8L129.9 177.6M137.9 137.4L144.8 136.5M134.8 265.4L141.8 264.5M177.3 427.1L185.1 423.9M168.6 451.3L175.5 450.4M179.5 221.9L186.4 221.0M125.6 171.2L133.4 167.9M163.8 424.7L170.7 423.9M156.5 384.9L164.7 390.7M198.3 369.2L206.1 365.9M189.1 275.0L196.1 274.2M167.4 155.5L175.6 161.3M193.1 383.7L200.0 382.8M160.2 115.6L167.1 114.8M201.2 341.4L209.3 347.2M151.9 98.7L158.8 97.9M177.1 208.6L185.2 214.4M146.9 331.8L155.0 337.6M172.1 441.6L179.0 440.8M143.1 122.9L150.9 119.6M139.7 291.9L146.6 291.1M129.1 161.5L136.9 158.3M173.8 436.8L181.6 433.5M196.6 374.0L203.5 373.2M191.3 388.5L199.1 385.2M172.2 182.0L180.4 187.8M182.6 412.6L189.5 411.8M139.6 132.5L147.4 129.3M169.8 168.8L176.8 167.9M151.7 358.3L159.8 364.1M170.3 446.4L178.1 443.2M154.1 371.6L161.1 370.8M132.4 252.1L140.6 257.9M184.3 248.4L191.2 247.6M187.8 398.1L195.6 394.9M196.3 314.8L204.5 320.6M157.8 102.4L165.9 108.2M198.8 328.1L205.7 327.3M149.3 345.0L156.2 344.2M144.5 318.5L151.4 317.6M142.1 305.2L150.2 311.0M161.3 411.4L169.5 417.2M122.8 199.0L130.9 204.8M146.6 113.2L154.4 110.0M193.9 301.6L200.9 300.7M174.7 195.3L181.6 194.5M137.2 278.6L145.4 284.4" stroke="#000026"/><path d="M190.0 241.0L198.2 246.8M209.6 356.3L217.4 353.0M174.3 443.8L182.4 449.6M155.3 107.6L162.2 106.7M210.5 353.8L217.4 353.0M186.0 421.5L192.9 420.6M172.0 141.4L178.9 140.5M170.7 134.7L178.9 140.5M199.7 294.1L207.8 299.9M140.4 148.6L148.2 145.4M148.3 126.9L155.2 126.1M188.6 414.2L196.4 411.0M193.0 402.1L199.9 401.3M135.7 231.3L143.9 237.1M194.8 267.5L203.0 273.3M137.0 238.0L143.9 237.1M151.8 117.2L158.8 116.4M196.5 392.5L203.4 391.6M141.3 146.2L148.2 145.4M157.9 100.3L165.8 97.1M202.6 375.6L210.4 372.3M134.3 165.5L141.2 164.7M192.1 404.6L199.9 401.3M143.9 139.0L151.8 135.7M162.3 88.2L169.2 87.4M182.5 431.1L189.4 430.3M132.1 211.4L139.1 210.6M130.8 175.2L137.8 174.3M137.8 155.9L144.8 155.0M165.9 397.3L172.8 396.5M207.0 363.5L213.9 362.7M161.4 90.7L169.2 87.4M127.3 184.8L134.2 184.0M129.9 177.6L137.8 174.3M144.8 136.5L151.8 135.7M141.8 264.5L148.7 263.7M185.1 423.9L192.9 420.6M175.5 450.4L182.4 449.6M186.4 221.0L193.3 220.2M133.4 167.9L141.2 164.7M170.7 423.9L177.6 423.1M164.7 390.7L172.8 396.5M206.1 365.9L213.9 362.7M196.1 274.2L203.0 273.3M175.6 161.3L183.7 167.1M200.0 382.8L206.9 382.0M167.1 114.8L174.1 114.0M209.3 347.2L217.4 353.0M158.8 97.9L165.8 97.1M185.2 214.4L193.3 220.2M155.0 337.6L163.2 343.4M179.0 440.8L185.9 439.9M150.9 119.6L158.8 116.4M146.6 291.1L153.5 290.2M136.9 158.3L144.8 155.0M181.6 433.5L189.4 430.3M203.5 373.2L210.4 372.3M199.1 385.2L206.9 382.0M180.4 187.8L188.5 193.7M189.5 411.8L196.4 411.0M147.4 129.3L155.2 126.1M176.8 167.9L183.7 167.1M159.8 364.1L168.0 369.9M178.1 443.2L185.9 439.9M161.1 370.8L168.0 369.9M140.6 257.9L148.7 263.7M191.2 247.6L198.2 246.8M195.6 394.9L203.4 391.6M204.5 320.6L212.6 326.4M165.9 108.2L174.1 114.0M205.7 327.3L212.6 326.4M156.2 344.2L163.2 343.4M151.4 317.6L158.3 316.8M150.2 311.0L158.3 316.8M169.5 417.2L177.6 423.1M130.9 204.8L139.1 210.6M154.4 110.0L162.2 106.7M200.9 300.7L207.8 299.9M181.6 194.5L188.5 193.7M145.4 284.4L153.5 290.2" stroke="#000016"/><path d="M188.5 193.7L193.3 220.2M213.9 362.7L217.4 353.0M177.6 423.1L182.4 449.6M137.8 174.3L141.2 164.7M183.7 167.1L188.5 193.7M172.8 396.5L177.6 423.1M144.8 155.0L148.2 145.4M178.9 140.5L183.7 167.1M193.3 220.2L198.2 246.8M212.6 326.4L217.4 353.0M196.4 411.0L199.9 401.3M148.7 263.7L153.5 290.2M163.2 343.4L168.0 369.9M155.2 126.1L158.8 116.4M203.4 391.6L206.9 382.0M143.9 237.1L148.7 263.7M199.9 401.3L203.4 391.6M158.3 316.8L163.2 343.4M139.1 210.6L143.9 237.1M168.0 369.9L172.8 396.5M206.9 382.0L210.4 372.3M174.1 114.0L178.9 140.5M182.4 449.6L185.9 439.9M134.2 184.0L139.1 210.6M185.9 439.9L189.4 430.3M169.2 87.4L174.1 114.0M203.0 273.3L207.8 299.9M134.2 184.0L137.8 174.3M189.4 430.3L192.9 420.6M192.9 420.6L196.4 411.0M153.5 290.2L158.3 316.8M207.8 299.9L212.6 326.4M165.8 97.1L169.2 87.4M141.2 164.7L144.8 155.0M198.2 246.8L203.0 273.3M151.8 135.7L155.2 126.1M158.8 116.4L162.2 106.7M162.2 106.7L165.8 97.1M210.4 372.3L213.9 362.7M148.2 145.4L151.8 135.7" stroke="#00000f"/><path d="M137.8 174.3L145.6 171.1M134.2 184.0L142.4 189.8M172.8 396.5L179.7 395.7M196.4 411.0L204.3 407.7M198.2 246.8L206.3 252.6M210.4 372.3L217.4 371.5M212.6 326.4L220.8 332.3M148.2 145.4L155.2 144.5M168.0 369.9L174.9 369.1M134.2 184.0L141.2 183.2M217.4 353.0L224.4 352.2M141.2 164.7L149.1 161.4M162.2 106.7L169.2 105.9M193.3 220.2L201.5 226.0M199.9 401.3L206.9 400.5M203.0 273.3L209.9 272.5M198.2 246.8L205.1 245.9M189.4 430.3L197.3 427.0M158.3 316.8L166.5 322.6M163.2 343.4L170.1 342.5M210.4 372.3L218.3 369.1M143.9 237.1L150.8 236.3M158.8 116.4L166.6 113.1M137.8 174.3L144.7 173.5M162.2 106.7L170.1 103.5M158.3 316.8L165.3 316.0M148.2 145.4L156.1 142.1M213.9 362.7L221.8 359.4M144.8 155.0L152.6 151.8M165.8 97.1L172.7 96.2M183.7 167.1L190.6 166.3M178.9 140.5L187.0 146.3M172.8 396.5L181.0 402.3M182.4 449.6L190.3 446.4M188.5 193.7L195.5 192.8M153.5 290.2L160.5 289.4M141.2 164.7L148.2 163.9M151.8 135.7L158.7 134.9M174.1 114.0L182.2 119.8M189.4 430.3L196.4 429.5M155.2 126.1L162.2 125.2M158.8 116.4L165.7 115.6M185.9 439.9L193.8 436.7M193.3 220.2L200.3 219.4M169.2 87.4L177.4 93.2M212.6 326.4L219.6 325.6M174.1 114.0L181.0 113.1M203.0 273.3L211.1 279.1M148.7 263.7L156.9 269.5M192.9 420.6L200.8 417.4M163.2 343.4L171.3 349.2M199.9 401.3L207.8 398.1M155.2 126.1L163.1 122.8M144.8 155.0L151.7 154.2M177.6 423.1L185.8 428.9M139.1 210.6L147.2 216.4M182.4 449.6L189.4 448.8M177.6 423.1L184.6 422.2M207.8 299.9L216.0 305.7M168.0 369.9L176.1 375.7M203.4 391.6L210.4 390.8M183.7 167.1L191.9 172.9M206.9 382.0L214.8 378.7M165.8 97.1L173.6 93.8M178.9 140.5L185.8 139.7M207.8 299.9L214.7 299.1M192.9 420.6L199.9 419.8M203.4 391.6L211.3 388.4M151.8 135.7L159.6 132.5M213.9 362.7L220.9 361.8M169.2 87.4L176.2 86.6M134.2 184.0L142.1 180.8M143.9 237.1L152.0 242.9M148.7 263.7L155.6 262.9M139.1 210.6L146.0 209.7M196.4 411.0L203.4 410.1M188.5 193.7L196.7 199.5M153.5 290.2L161.7 296.1M206.9 382.0L213.9 381.2M185.9 439.9L192.9 439.1" stroke="#00000d"/><path d="M145.6 171.1L153.4 167.9M142.4 189.8L150.5 195.6M179.7 395.7L186.7 394.8M204.3 407.7L212.1 404.5M206.3 252.6L214.5 258.4M217.4 371.5L224.3 370.7M220.8 332.3L228.9 338.1M155.2 144.5L162.1 143.7M174.9 369.1L181.9 368.3M141.2 183.2L148.1 182.3M224.4 352.2L231.3 351.3M149.1 161.4L156.9 158.2M169.2 105.9L176.1 105.1M201.5 226.0L209.6 231.8M206.9 400.5L213.8 399.6M209.9 272.5L216.9 271.7M205.1 245.9L212.0 245.1M197.3 427.0L205.1 423.8M166.5 322.6L174.6 328.4M170.1 342.5L177.0 341.7M218.3 369.1L226.1 365.8M150.8 236.3L157.8 235.5M166.6 113.1L174.4 109.9M144.7 173.5L151.6 172.7M170.1 103.5L177.9 100.2M165.3 316.0L172.2 315.1M156.1 142.1L163.9 138.9M221.8 359.4L229.6 356.2M152.6 151.8L160.4 148.5M172.7 96.2L179.6 95.4M190.6 166.3L197.6 165.4M187.0 146.3L195.2 152.1M181.0 402.3L189.1 408.1M190.3 446.4L198.1 443.1M195.5 192.8L202.4 192.0M160.5 289.4L167.4 288.6M148.2 163.9L155.1 163.0M158.7 134.9L165.6 134.0M182.2 119.8L190.4 125.6M196.4 429.5L203.3 428.6M162.2 125.2L169.1 124.4M165.7 115.6L172.6 114.7M193.8 436.7L201.6 433.5M200.3 219.4L207.2 218.5M177.4 93.2L185.5 99.0M219.6 325.6L226.5 324.8M181.0 113.1L187.9 112.3M211.1 279.1L219.3 284.9M156.9 269.5L165.0 275.3M200.8 417.4L208.6 414.1M171.3 349.2L179.5 355.0M207.8 398.1L215.6 394.8M163.1 122.8L170.9 119.6M151.7 154.2L158.6 153.4M185.8 428.9L193.9 434.7M147.2 216.4L155.4 222.2M189.4 448.8L196.3 447.9M184.6 422.2L191.5 421.4M216.0 305.7L224.1 311.5M176.1 375.7L184.3 381.5M210.4 390.8L217.3 390.0M191.9 172.9L200.0 178.7M214.8 378.7L222.6 375.5M173.6 93.8L181.4 90.6M185.8 139.7L192.8 138.9M214.7 299.1L221.7 298.2M199.9 419.8L206.8 419.0M211.3 388.4L219.1 385.2M159.6 132.5L167.4 129.2M220.9 361.8L227.8 361.0M176.2 86.6L183.1 85.7M142.1 180.8L149.9 177.5M152.0 242.9L160.2 248.7M155.6 262.9L162.6 262.0M146.0 209.7L152.9 208.9M203.4 410.1L210.3 409.3M196.7 199.5L204.8 205.3M161.7 296.1L169.8 301.9M213.9 381.2L220.8 380.3M192.9 439.1L199.8 438.3" stroke="#000009"/><path d="M153.4 167.9L161.2 164.6M150.5 195.6L158.7 201.4M186.7 394.8L193.6 394.0M212.1 404.5L219.9 401.2M214.5 258.4L222.6 264.2M224.3 370.7L231.3 369.8M228.9 338.1L237.1 343.9M162.1 143.7L169.1 142.9M181.9 368.3L188.8 367.4M148.1 182.3L155.1 181.5M231.3 351.3L238.3 350.5M156.9 158.2L164.7 154.9M176.1 105.1L183.1 104.2M209.6 231.8L217.8 237.6M213.8 399.6L220.8 398.8M216.9 271.7L223.8 270.8M212.0 245.1L219.0 244.3M205.1 423.8L212.9 420.5M174.6 328.4L182.8 334.2M177.0 341.7L184.0 340.9M226.1 365.8L233.9 362.6M157.8 235.5L164.7 234.6M174.4 109.9L182.2 106.6M151.6 172.7L158.6 171.9M177.9 100.2L185.7 97.0M172.2 315.1L179.2 314.3M163.9 138.9L171.7 135.6M229.6 356.2L237.4 352.9M160.4 148.5L168.2 145.3M179.6 95.4L186.6 94.6M197.6 165.4L204.5 164.6M195.2 152.1L203.3 158.0M189.1 408.1L197.2 413.9M198.1 443.1L205.9 439.9M202.4 192.0L209.3 191.2M167.4 288.6L174.3 287.8M155.1 163.0L162.1 162.2M165.6 134.0L172.6 133.2M190.4 125.6L198.5 131.4M203.3 428.6L210.3 427.8M169.1 124.4L176.1 123.6M172.6 114.7L179.6 113.9M201.6 433.5L209.4 430.2M207.2 218.5L214.2 217.7M185.5 99.0L193.7 104.8M226.5 324.8L233.4 324.0M187.9 112.3L194.9 111.5M219.3 284.9L227.4 290.8M165.0 275.3L173.1 281.1M208.6 414.1L216.4 410.9M179.5 355.0L187.6 360.8M215.6 394.8L223.4 391.6M170.9 119.6L178.7 116.3M158.6 153.4L165.6 152.5M193.9 434.7L202.1 440.5M155.4 222.2L163.5 228.0M196.3 447.9L203.3 447.1M191.5 421.4L198.4 420.6M224.1 311.5L232.2 317.3M184.3 381.5L192.4 387.4M217.3 390.0L224.3 389.2M200.0 178.7L208.1 184.5M222.6 375.5L230.4 372.2M181.4 90.6L189.2 87.3M192.8 138.9L199.7 138.0M221.7 298.2L228.6 297.4M206.8 419.0L213.8 418.1M219.1 385.2L226.9 381.9M167.4 129.2L175.2 126.0M227.8 361.0L234.8 360.2M183.1 85.7L190.1 84.9M149.9 177.5L157.7 174.3M160.2 248.7L168.3 254.6M162.6 262.0L169.5 261.2M152.9 208.9L159.9 208.1M210.3 409.3L217.3 408.5M204.8 205.3L213.0 211.1M169.8 301.9L178.0 307.7M220.8 380.3L227.8 379.5M199.8 438.3L206.8 437.5" stroke="#000006"/><path d="M161.2 164.6L169.0 161.4M158.7 201.4L166.8 207.2M193.6 394.0L200.6 393.2M219.9 401.2L227.7 398.0M222.6 264.2L230.7 270.0M231.3 369.8L238.2 369.0M237.1 343.9L245.2 349.7M169.1 142.9L176.0 142.0M188.8 367.4L195.7 366.6M155.1 181.5L162.0 180.7M238.3 350.5L245.2 349.7M164.7 154.9L172.5 151.7M183.1 104.2L190.0 103.4M217.8 237.6L225.9 243.4M220.8 398.8L227.7 398.0M223.8 270.8L230.7 270.0M219.0 244.3L225.9 243.4M212.9 420.5L220.7 417.3M182.8 334.2L190.9 340.0M184.0 340.9L190.9 340.0M233.9 362.6L241.7 359.3M164.7 234.6L171.6 233.8M182.2 106.6L190.0 103.4M158.6 171.9L165.5 171.0M185.7 97.0L193.5 93.7M179.2 314.3L186.1 313.5M171.7 135.6L179.5 132.4M237.4 352.9L245.2 349.7M168.2 145.3L176.0 142.0M186.6 94.6L193.5 93.7M204.5 164.6L211.5 163.8M203.3 158.0L211.5 163.8M197.2 413.9L205.4 419.7M205.9 439.9L213.7 436.6M209.3 191.2L216.3 190.3M174.3 287.8L181.3 286.9M162.1 162.2L169.0 161.4M172.6 133.2L179.5 132.4M198.5 131.4L206.6 137.2M210.3 427.8L217.2 427.0M176.1 123.6L183.0 122.7M179.6 113.9L186.5 113.1M209.4 430.2L217.2 427.0M214.2 217.7L221.1 216.9M193.7 104.8L201.8 110.6M233.4 324.0L240.4 323.1M194.9 111.5L201.8 110.6M227.4 290.8L235.6 296.6M173.1 281.1L181.3 286.9M216.4 410.9L224.2 407.6M187.6 360.8L195.7 366.6M223.4 391.6L231.2 388.3M178.7 116.3L186.5 113.1M165.6 152.5L172.5 151.7M202.1 440.5L210.2 446.3M163.5 228.0L171.6 233.8M203.3 447.1L210.2 446.3M198.4 420.6L205.4 419.7M232.2 317.3L240.4 323.1M192.4 387.4L200.6 393.2M224.3 389.2L231.2 388.3M208.1 184.5L216.3 190.3M230.4 372.2L238.2 369.0M189.2 87.3L197.0 84.1M199.7 138.0L206.6 137.2M228.6 297.4L235.6 296.6M213.8 418.1L220.7 417.3M226.9 381.9L234.7 378.7M175.2 126.0L183.0 122.7M234.8 360.2L241.7 359.3M190.1 84.9L197.0 84.1M157.7 174.3L165.5 171.0M168.3 254.6L176.5 260.4M169.5 261.2L176.5 260.4M159.9 208.1L166.8 207.2M217.3 408.5L224.2 407.6M213.0 211.1L221.1 216.9M178.0 307.7L186.1 313.5M227.8 379.5L234.7 378.7M206.8 437.5L213.7 436.6" stroke="#000002"/><path d="M390.7 387.7L389.4 351.4M328.8 86.8L360.0 73.8M324.9 296.8L329.7 323.4M359.4 400.6L390.7 387.7M291.1 289.9L295.9 316.5M254.9 223.8L259.7 250.4M240.4 323.1L268.1 319.8M223.5 363.3L251.2 359.9M269.4 356.0L300.7 343.0M252.5 77.4L257.3 104.0M189.8 177.3L217.5 174.0M165.5 171.0L169.0 161.4M242.0 106.4L245.5 96.7M300.4 417.0L303.9 407.3M321.2 433.0L324.7 423.3M367.5 172.8L372.3 199.3M329.7 323.4L334.5 350.0M228.0 145.0L231.5 135.4M355.9 410.3L383.7 407.0M217.5 174.0L248.8 161.0M317.6 123.9L345.4 120.5M373.6 235.5L372.3 199.3M370.1 245.2L373.6 235.5M232.0 253.7L264.5 276.9M399.9 322.5L398.6 286.2M381.9 252.4L385.4 242.8M324.9 349.4L352.7 346.0M362.9 391.0L366.4 381.3M354.8 247.6L353.5 211.4M249.0 87.1L276.8 83.8M352.7 346.0L383.9 333.0M245.2 170.7L273.0 167.4M362.6 146.2L361.3 110.0M324.7 423.3L328.2 413.6M236.8 280.3L264.5 276.9M286.7 381.7L314.4 378.3M318.8 286.6L346.6 283.2M238.2 369.0L241.7 359.3M378.9 380.4L382.4 370.8M255.8 141.7L283.5 138.4M169.0 161.4L196.8 158.0M260.9 413.1L293.4 436.3M364.8 100.3L369.6 126.9M383.7 407.0L382.4 370.8M304.2 154.4L332.0 151.0M238.2 369.0L265.9 365.7M305.6 190.6L310.4 217.2M375.8 189.7L379.3 180.0M350.8 139.0L355.6 165.5M166.8 207.2L199.4 230.5M339.3 376.5L367.1 373.2M332.2 77.1L363.5 64.1M276.5 157.7L307.8 144.7M356.5 83.4L360.0 73.8M315.2 243.7L347.8 266.9M295.9 316.5L323.6 313.1M314.4 378.3L345.7 365.3M347.8 266.9L352.6 293.5M171.6 233.8L199.4 230.5M299.5 180.3L304.4 206.9M408.2 339.4L406.9 303.1M323.6 313.1L328.4 339.7M268.1 319.8L295.9 316.5M395.1 295.9L399.9 322.5M308.0 70.8L312.8 97.3M320.0 270.3L347.8 266.9M229.6 107.3L257.3 104.0M210.8 119.4L238.5 116.1M357.8 119.6L356.5 83.4M237.9 442.9L241.4 433.3M398.6 286.2L402.1 276.6M269.4 303.5L301.9 326.7M265.9 365.7L293.7 362.3M374.5 153.4L379.3 180.0M217.2 427.0L244.9 423.6M397.7 368.3L396.4 332.1M364.4 300.7L369.2 327.3M364.0 182.4L362.6 146.2M314.0 260.0L341.7 256.7M340.6 94.0L373.1 117.2M368.8 209.0L373.6 235.5M338.7 384.7L342.2 375.0M207.2 129.1L210.8 119.4M297.1 300.2L301.9 326.7M309.2 233.5L341.7 256.7M250.1 197.2L254.9 223.8M221.0 164.4L248.8 161.0M213.8 310.1L218.7 336.7M210.2 446.3L213.7 436.6M333.3 187.3L338.1 213.8M328.2 413.6L359.4 400.6M345.4 120.5L373.1 117.2M362.2 346.6L367.1 373.2M342.5 122.1L346.0 112.4M321.4 359.0L349.2 355.7M297.5 99.7L328.8 86.8M289.9 127.2L322.5 150.4M295.9 316.5L300.7 343.0M211.5 163.8L216.3 190.3M190.0 103.4L221.2 90.4M365.3 218.6L368.8 209.0M186.1 313.5L190.9 340.0M311.6 379.8L344.1 403.1M404.7 349.0L408.2 339.4M277.8 193.9L310.4 217.2M245.5 96.7L273.2 93.4M300.8 164.0L332.0 151.0M334.5 350.0L339.3 376.5M317.6 123.9L322.5 150.4M321.2 433.0L348.9 429.6M322.5 150.4L350.2 147.1M370.1 245.2L368.8 209.0M311.2 135.1L339.0 131.7M385.4 242.8L384.1 206.6M232.0 253.7L259.7 250.4M396.4 332.1L399.9 322.5M296.9 426.6L300.4 417.0M227.7 398.0L258.9 385.0M259.2 132.1L287.0 128.7M336.9 230.1L369.5 253.4M223.5 363.3L228.3 389.8M236.8 280.3L241.6 306.8M189.8 177.3L194.6 203.9M304.4 206.9L336.9 230.1M377.1 225.9L380.6 216.2M280.0 148.0L307.8 144.7M364.7 226.8L392.4 223.5M211.5 163.8L244.0 187.0M183.0 122.7L186.5 113.1M267.0 157.1L299.5 180.3M349.2 355.7L376.9 352.4M303.9 407.3L331.7 404.0M218.7 336.7L246.4 333.4M335.2 394.3L362.9 391.0M347.8 266.9L351.3 257.3M271.8 183.7L299.5 180.3M166.8 207.2L194.6 203.9M245.2 170.7L250.1 197.2M189.8 177.3L221.0 164.4M315.2 243.7L343.0 240.4M324.9 296.8L357.4 320.1M258.9 385.0L290.2 372.0M389.4 351.4L388.1 315.2M262.1 130.5L294.7 153.8M352.6 293.5L351.3 257.3M380.4 342.7L408.2 339.4M248.4 414.0L251.9 404.3M228.3 389.8L260.9 413.1M235.0 125.7L262.8 122.4M217.5 174.0L221.0 164.4M367.9 291.1L371.4 281.4M165.5 171.0L196.8 158.0M358.3 238.0L357.0 201.7M217.8 100.1L221.2 90.4M272.9 346.4L300.7 343.0M329.7 323.4L362.2 346.6M256.1 386.5L260.9 413.1M209.0 283.6L213.8 310.1M357.4 320.1L356.1 283.8M259.2 132.1L290.5 119.1M371.4 281.4L374.9 271.8M372.7 317.6L371.4 281.4M345.1 194.5L343.8 158.3M378.4 262.1L383.2 288.7M290.2 372.0L317.9 368.7M359.9 200.2L387.6 196.9M282.6 220.5L310.4 217.2M213.7 436.6L241.4 433.3M362.9 391.0L394.2 378.0M290.5 119.1L318.2 115.7M248.8 213.6L281.4 236.8M347.3 148.6L352.1 175.2M328.8 86.8L356.5 83.4M383.2 288.7L388.1 315.2M238.2 369.0L269.4 356.0M268.1 319.8L272.9 346.4M316.4 406.4L344.1 403.1M281.4 236.8L309.2 233.5M221.2 90.4L252.5 77.4M352.1 175.2L357.0 201.7M203.8 138.7L207.2 129.1M336.8 177.6L340.3 167.9M257.3 104.0L289.9 127.2M262.4 375.3L293.7 362.3M318.2 115.7L346.0 112.4M201.8 110.6L234.4 133.9M195.7 366.6L223.5 363.3M395.1 295.9L393.7 259.7M368.3 90.7L373.1 117.2M348.9 429.6L376.7 426.3M371.0 163.1L374.5 153.4M362.6 146.2L367.5 172.8M269.2 430.0L272.7 420.3M373.4 362.0L376.9 352.4M241.7 359.3L245.2 349.7M386.7 279.0L385.4 242.8M392.9 341.8L391.6 305.6M374.5 153.4L378.0 143.8M204.2 257.0L209.0 283.6M312.8 97.3L345.4 120.5M360.5 192.1L364.0 182.4M259.7 250.4L292.3 273.6M368.8 209.0L372.3 199.3M265.9 365.7L297.2 352.7M176.0 142.0L203.8 138.7M361.8 228.3L360.5 192.1M363.1 264.5L367.9 291.1M211.5 163.8L239.2 160.4M267.0 157.1L294.7 153.8M221.0 164.4L252.2 151.4M293.7 362.3L297.2 352.7M350.2 147.1L382.8 170.3M227.1 227.1L254.9 223.8M346.6 283.2L379.1 306.5M296.9 426.6L324.7 423.3M276.8 83.8L280.2 74.1M194.6 203.9L222.3 200.6M271.8 183.7L276.6 210.2M355.0 173.7L382.8 170.3M321.4 359.0L352.7 346.0M210.2 446.3L241.4 433.3M306.7 353.3L339.3 376.5M221.1 216.9L253.7 240.1M372.3 199.3L377.1 225.9M245.5 96.7L276.8 83.8M274.2 330.1L306.7 353.3M367.9 291.1L366.6 254.9M332.1 203.6L336.9 230.1M225.9 243.4L253.7 240.1M285.1 100.7L289.9 127.2M311.2 135.1L342.5 122.1M179.5 132.4L210.8 119.4M385.4 242.8L390.2 269.3M186.1 313.5L218.7 336.7M283.5 138.4L287.0 128.7M332.0 151.0L335.5 141.4M379.7 298.3L378.4 262.1M279.0 356.6L306.7 353.3M241.7 359.3L269.4 356.0M397.2 250.0L402.1 276.6M334.5 350.0L367.1 373.2M189.8 177.3L193.2 167.7M254.9 223.8L287.5 247.0M314.8 125.4L318.2 115.7M362.2 346.6L360.9 310.4M224.2 407.6L251.9 404.3M388.1 315.2L386.7 279.0M348.6 184.8L347.3 148.6M383.2 288.7L386.7 279.0M335.5 141.4L339.0 131.7M364.8 100.3L363.5 64.1M366.1 136.5L371.0 163.1M377.6 344.2L381.1 334.5M282.6 220.5L287.5 247.0M279.7 401.0L283.2 391.3M357.0 201.7L355.6 165.5M304.5 80.4L332.2 77.1M263.3 293.2L295.9 316.5M342.2 375.0L373.4 362.0M369.5 253.4L374.3 279.9M352.1 175.2L355.6 165.5M340.3 167.9L339.0 131.7M324.9 349.4L328.4 339.7M382.4 370.8L381.1 334.5M364.4 300.7L367.9 291.1M375.4 390.1L374.1 353.9M245.2 170.7L248.8 161.0M316.4 406.4L321.2 433.0M318.2 115.7L349.5 102.7M335.2 394.3L366.4 381.3M216.3 190.3L248.8 213.6M292.3 273.6L320.0 270.3M342.5 122.1L347.3 148.6M176.5 260.4L181.3 286.9M190.0 103.4L217.8 100.1M183.0 122.7L214.2 109.7M269.4 356.0L297.2 352.7M264.5 276.9L292.3 273.6M389.4 351.4L394.2 378.0M276.6 210.2L309.2 233.5M358.3 238.0L363.1 264.5M351.4 309.8L379.1 306.5M365.7 337.0L370.6 363.5M314.4 378.3L342.2 375.0M368.8 209.0L367.5 172.8M193.2 167.7L224.5 154.7M324.7 423.3L355.9 410.3M376.2 308.0L374.9 271.8M380.6 216.2L384.1 206.6M333.3 187.3L332.0 151.0M369.9 371.7L373.4 362.0M304.5 80.4L335.8 67.4M350.2 147.1L378.0 143.8M199.4 230.5L232.0 253.7M273.0 167.4L304.2 154.4M190.9 340.0L218.7 336.7M383.9 333.0L411.7 329.7M230.7 270.0L263.3 293.2M306.7 353.3L334.5 350.0M244.0 187.0L248.8 213.6M286.2 263.3L318.8 286.6M392.4 223.5L397.2 250.0M227.7 398.0L231.2 388.3M258.9 385.0L262.4 375.3M213.8 310.1L246.4 333.4M262.8 122.4L294.0 109.4M200.6 393.2L233.1 416.4M345.1 194.5L350.0 221.1M234.4 133.9L262.1 130.5M293.4 436.3L321.2 433.0M361.3 110.0L366.1 136.5M233.1 416.4L237.9 442.9M171.6 233.8L176.5 260.4M186.5 113.1L217.8 100.1M241.6 306.8L246.4 333.4M242.0 106.4L273.2 93.4M369.2 327.3L367.9 291.1M290.5 119.1L294.0 109.4M241.4 433.3L272.7 420.3M205.4 419.7L233.1 416.4M308.0 70.8L340.6 94.0M341.7 256.7L346.6 283.2M355.9 410.3L359.4 400.6M373.4 362.0L404.7 349.0M255.8 141.7L259.2 132.1M338.7 384.7L369.9 371.7M280.2 74.1L308.0 70.8M372.7 317.6L377.6 344.2M346.5 230.7L345.1 194.5M276.2 410.6L279.7 401.0M360.9 310.4L364.4 300.7M214.2 109.7L245.5 96.7M239.2 160.4L244.0 187.0M359.6 274.2L363.1 264.5M176.5 260.4L209.0 283.6M227.7 398.0L255.4 394.6M200.2 148.4L231.5 135.4M276.6 210.2L304.4 206.9M386.7 279.0L391.6 305.6M203.8 138.7L235.0 125.7M340.3 167.9L345.1 194.5M355.6 165.5L360.5 192.1M374.9 271.8L373.6 235.5M372.3 199.3L371.0 163.1M379.7 298.3L384.6 324.9M169.0 161.4L172.5 151.7M384.6 324.9L388.1 315.2M283.8 383.2L316.4 406.4M342.2 375.0L345.7 365.3M387.6 196.9L392.4 223.5M385.9 361.1L384.6 324.9M245.2 170.7L277.8 193.9M359.9 200.2L364.7 226.8M332.2 77.1L360.0 73.8M310.9 388.0L314.4 378.3M393.7 259.7L392.4 223.5M348.6 184.8L353.5 211.4M353.5 211.4L357.0 201.7M374.1 353.9L378.9 380.4M264.5 276.9L269.4 303.5M374.3 279.9L406.9 303.1M297.2 352.7L328.4 339.7M335.8 67.4L368.3 90.7M314.8 125.4L346.0 112.4M343.0 240.4L347.8 266.9M255.4 394.6L283.2 391.3M272.7 420.3L303.9 407.3M375.4 390.1L380.2 416.6M269.8 103.1L273.2 93.4M371.4 281.4L376.2 308.0M283.2 391.3L314.4 378.3M366.4 381.3L369.9 371.7M369.5 253.4L402.1 276.6M273.2 93.4L304.5 80.4M206.6 137.2L239.2 160.4M200.6 393.2L228.3 389.8M258.9 385.0L286.7 381.7M193.5 93.7L224.8 80.8M356.1 283.8L360.9 310.4M231.2 388.3L258.9 385.0M283.5 138.4L314.8 125.4M240.4 323.1L272.9 346.4M217.2 427.0L220.7 417.3M366.1 136.5L369.6 126.9M394.2 378.0L397.7 368.3M234.7 378.7L262.4 375.3M388.9 233.1L387.6 196.9M390.2 269.3L395.1 295.9M224.8 80.8L252.5 77.4M373.6 235.5L377.1 225.9M327.3 177.0L355.0 173.7M300.8 164.0L328.5 160.7M357.8 119.6L361.3 110.0M363.1 264.5L366.6 254.9M253.7 240.1L286.2 263.3M225.9 243.4L230.7 270.0M378.9 380.4L377.6 344.2M378.4 262.1L377.1 225.9M343.8 158.3L342.5 122.1M346.0 112.4L350.8 139.0M345.7 365.3L349.2 355.7M349.5 102.7L354.3 129.3M234.4 133.9L239.2 160.4M258.5 266.7L286.2 263.3M360.9 310.4L359.6 274.2M317.9 368.7L321.4 359.0M287.0 128.7L290.5 119.1M236.8 280.3L269.4 303.5M347.3 148.6L346.0 112.4M381.1 334.5L385.9 361.1M303.9 407.3L307.4 397.6M204.2 257.0L236.8 280.3M196.8 158.0L224.5 154.7M307.4 397.6L310.9 388.0M238.5 116.1L269.8 103.1M341.6 204.2L345.1 194.5M365.7 337.0L369.2 327.3M307.8 144.7L335.5 141.4M370.6 363.5L375.4 390.1M272.7 420.3L276.2 410.6M369.6 126.9L374.5 153.4M172.5 151.7L200.2 148.4M377.1 225.9L375.8 189.7M307.8 144.7L311.2 135.1M300.4 417.0L328.2 413.6M201.8 110.6L206.6 137.2M265.7 439.6L269.2 430.0M251.2 359.9L283.8 383.2M321.8 106.1L353.0 93.1M224.5 154.7L252.2 151.4M374.3 279.9L402.1 276.6M359.1 155.9L364.0 182.4M266.2 112.7L294.0 109.4M403.4 312.8L408.2 339.4M171.6 233.8L204.2 257.0M193.2 167.7L196.8 158.0M340.6 94.0L368.3 90.7M269.4 303.5L297.1 300.2M408.2 339.4L411.7 329.7M391.6 305.6L395.1 295.9M381.9 252.4L380.6 216.2M256.1 386.5L288.6 409.7M376.9 352.4L380.4 342.7M355.9 410.3L387.2 397.3M245.2 349.7L272.9 346.4M384.1 206.6L388.9 233.1M269.8 103.1L297.5 99.7M351.3 257.3L354.8 247.6M260.9 413.1L288.6 409.7M273.0 167.4L305.6 190.6M355.0 173.7L359.9 200.2M376.9 352.4L404.7 349.0M229.6 107.3L234.4 133.9M311.6 379.8L339.3 376.5M404.7 349.0L403.4 312.8M277.8 193.9L305.6 190.6M287.5 247.0L320.0 270.3M324.9 349.4L356.2 336.4M305.6 190.6L338.1 213.8M221.1 216.9L225.9 243.4M251.9 404.3L283.2 391.3M221.2 90.4L249.0 87.1M332.1 203.6L364.7 226.8M318.8 286.6L323.6 313.1M310.4 217.2L338.1 213.8M349.5 102.7L353.0 93.1M241.4 433.3L244.9 423.6M228.0 145.0L255.8 141.7M331.7 404.0L362.9 391.0M253.7 240.1L281.4 236.8M249.0 87.1L280.2 74.1M336.9 230.1L364.7 226.8M371.9 399.7L376.7 426.3M288.6 409.7L321.2 433.0M376.7 426.3L380.2 416.6M269.2 430.0L300.4 417.0M169.0 161.4L200.2 148.4M343.0 240.4L346.5 230.7M354.3 129.3L353.0 93.1M304.4 206.9L332.1 203.6M307.4 397.6L335.2 394.3M398.6 286.2L397.2 250.0M399.9 322.5L404.7 349.0M359.9 200.2L392.4 223.5M255.4 394.6L286.7 381.7M231.5 135.4L259.2 132.1M324.7 423.3L352.4 420.0M224.8 80.8L229.6 107.3M300.7 343.0L328.4 339.7M283.2 391.3L286.7 381.7M293.7 362.3L324.9 349.4M341.6 204.2L340.3 167.9M355.6 165.5L359.1 155.9M183.0 122.7L210.8 119.4M380.2 416.6L383.7 407.0M220.7 417.3L248.4 414.0M366.6 254.9L370.1 245.2M276.2 410.6L303.9 407.3M258.5 266.7L263.3 293.2M248.8 161.0L252.2 151.4M360.5 192.1L359.1 155.9M365.3 218.6L364.0 182.4M228.3 389.8L256.1 386.5M386.7 279.0L390.2 269.3M216.3 190.3L221.1 216.9M294.0 109.4L325.2 96.4M344.1 403.1L348.9 429.6M369.2 327.3L374.1 353.9M314.0 260.0L318.8 286.6M249.0 87.1L252.5 77.4M322.5 150.4L327.3 177.0M217.2 427.0L248.4 414.0M374.9 271.8L379.7 298.3M193.2 167.7L221.0 164.4M379.3 180.0L384.1 206.6M232.0 253.7L236.8 280.3M244.0 187.0L276.6 210.2M367.1 373.2L371.9 399.7M338.1 213.8L343.0 240.4M367.5 172.8L371.0 163.1M343.8 158.3L348.6 184.8M269.4 356.0L272.9 346.4M238.5 116.1L242.0 106.4M381.1 334.5L384.6 324.9M248.8 213.6L276.6 210.2M224.5 154.7L255.8 141.7M197.0 84.1L229.6 107.3M273.0 167.4L300.8 164.0M190.9 340.0L195.7 366.6M401.2 358.7L404.7 349.0M162.0 180.7L165.5 171.0M246.4 333.4L279.0 356.6M279.7 401.0L310.9 388.0M359.4 400.6L362.9 391.0M374.1 353.9L372.7 317.6M269.4 303.5L274.2 330.1M201.8 110.6L229.6 107.3M336.8 177.6L335.5 141.4M311.6 379.8L316.4 406.4M213.7 436.6L217.2 427.0M257.3 104.0L285.1 100.7M277.8 193.9L282.6 220.5M317.9 368.7L345.7 365.3M305.6 190.6L333.3 187.3M390.2 269.3L393.7 259.7M381.9 252.4L386.7 279.0M321.2 433.0L352.4 420.0M347.8 266.9L346.5 230.7M262.8 122.4L290.5 119.1M286.7 381.7L317.9 368.7M280.0 148.0L311.2 135.1M255.8 141.7L287.0 128.7M369.6 126.9L373.1 117.2M172.5 151.7L203.8 138.7M371.0 163.1L369.6 126.9M324.9 296.8L352.6 293.5M387.2 397.3L390.7 387.7M263.3 293.2L291.1 289.9M378.9 380.4L383.7 407.0M395.1 295.9L398.6 286.2M259.7 250.4L287.5 247.0M239.2 160.4L271.8 183.7M374.5 153.4L373.1 117.2M336.9 230.1L341.7 256.7M266.2 112.7L297.5 99.7M370.1 245.2L374.9 271.8M312.8 97.3L340.6 94.0M373.6 235.5L378.4 262.1M314.4 378.3L317.9 368.7M307.8 144.7L339.0 131.7M267.0 157.1L271.8 183.7M218.7 336.7L223.5 363.3M371.4 281.4L370.1 245.2M294.0 109.4L297.5 99.7M384.1 206.6L387.6 196.9M339.0 131.7L343.8 158.3M222.3 200.6L254.9 223.8M338.7 384.7L366.4 381.3M200.2 148.4L228.0 145.0M227.1 227.1L232.0 253.7M299.5 180.3L332.1 203.6M310.9 388.0L342.2 375.0M221.1 216.9L248.8 213.6M376.9 352.4L408.2 339.4M406.9 303.1L411.7 329.7M325.2 96.4L353.0 93.1M356.1 283.8L359.6 274.2M339.3 376.5L344.1 403.1M375.8 189.7L380.6 216.2M370.6 363.5L369.2 327.3M235.0 125.7L266.2 112.7M281.4 236.8L286.2 263.3M291.1 289.9L323.6 313.1M273.2 93.4L301.0 90.1M350.8 139.0L354.3 129.3M250.1 197.2L282.6 220.5M338.1 213.8L341.6 204.2M309.2 233.5L314.0 260.0M320.0 270.3L324.9 296.8M252.2 151.4L283.5 138.4M228.0 145.0L259.2 132.1M376.2 308.0L379.7 298.3M254.9 223.8L282.6 220.5M194.6 203.9L199.4 230.5M353.0 93.1L356.5 83.4M331.7 404.0L335.2 394.3M230.7 270.0L235.6 296.6M360.0 73.8L363.5 64.1M217.5 174.0L245.2 170.7M367.5 172.8L366.1 136.5M371.9 399.7L375.4 390.1M286.7 381.7L290.2 372.0M280.0 148.0L283.5 138.4M377.6 344.2L376.2 308.0M294.7 153.8L299.5 180.3M186.5 113.1L214.2 109.7M314.8 125.4L342.5 122.1M241.4 433.3L269.2 430.0M228.3 389.8L233.1 416.4M222.3 200.6L227.1 227.1M297.1 300.2L329.7 323.4M345.4 120.5L350.2 147.1M352.7 346.0L380.4 342.7M379.1 306.5L406.9 303.1M364.0 182.4L368.8 209.0M296.9 426.6L328.2 413.6M301.9 326.7L329.7 323.4M216.3 190.3L244.0 187.0M292.3 273.6L297.1 300.2M223.5 363.3L256.1 386.5M396.4 332.1L401.2 358.7M323.6 313.1L356.2 336.4M220.7 417.3L251.9 404.3M276.2 410.6L307.4 397.6M317.9 368.7L349.2 355.7M365.3 218.6L370.1 245.2M351.4 309.8L356.2 336.4M274.2 330.1L301.9 326.7M377.1 225.9L381.9 252.4M399.9 322.5L403.4 312.8M224.5 154.7L228.0 145.0M367.1 373.2L370.6 363.5M186.1 313.5L213.8 310.1M290.2 372.0L293.7 362.3M325.2 96.4L328.8 86.8M193.5 93.7L197.0 84.1M328.5 160.7L332.0 151.0M269.2 430.0L296.9 426.6M380.6 216.2L379.3 180.0M344.1 403.1L376.7 426.3M334.5 350.0L362.2 346.6M238.5 116.1L266.2 112.7M221.0 164.4L224.5 154.7M364.7 226.8L369.5 253.4M383.2 288.7L381.9 252.4M299.5 180.3L327.3 177.0M248.4 414.0L279.7 401.0M255.4 394.6L258.9 385.0M345.7 365.3L376.9 352.4M352.1 175.2L350.8 139.0M217.8 100.1L249.0 87.1M165.5 171.0L193.2 167.7M297.2 352.7L324.9 349.4M390.7 387.7L394.2 378.0M166.8 207.2L171.6 233.8M293.7 362.3L321.4 359.0M209.0 283.6L241.6 306.8M364.4 300.7L363.1 264.5M336.8 177.6L341.6 204.2M237.9 442.9L269.2 430.0M384.6 324.9L383.2 288.7M315.2 243.7L320.0 270.3M245.5 96.7L249.0 87.1M279.0 356.6L283.8 383.2M402.1 276.6L406.9 303.1M259.2 132.1L262.8 122.4M250.1 197.2L277.8 193.9M213.8 310.1L241.6 306.8M338.1 213.8L336.8 177.6M366.6 254.9L371.4 281.4M283.2 391.3L310.9 388.0M295.9 316.5L328.4 339.7M353.5 211.4L352.1 175.2M297.5 99.7L325.2 96.4M189.8 177.3L222.3 200.6M241.7 359.3L272.9 346.4M371.0 163.1L375.8 189.7M308.0 70.8L335.8 67.4M391.6 305.6L396.4 332.1M268.1 319.8L300.7 343.0M301.0 90.1L332.2 77.1M217.5 174.0L222.3 200.6M193.5 93.7L221.2 90.4M374.3 279.9L379.1 306.5M235.6 296.6L240.4 323.1M328.2 413.6L355.9 410.3M367.9 291.1L372.7 317.6M181.3 286.9L209.0 283.6M360.5 192.1L365.3 218.6M283.5 138.4L311.2 135.1M221.2 90.4L224.8 80.8M297.1 300.2L324.9 296.8M262.4 375.3L265.9 365.7M231.5 135.4L235.0 125.7M362.6 146.2L366.1 136.5M357.4 320.1L362.2 346.6M349.2 355.7L352.7 346.0M354.8 247.6L358.3 238.0M231.2 388.3L234.7 378.7M311.2 135.1L314.8 125.4M301.9 326.7L306.7 353.3M162.0 180.7L166.8 207.2M359.6 274.2L358.3 238.0M234.7 378.7L238.2 369.0M287.0 128.7L318.2 115.7M382.8 170.3L387.6 196.9M382.4 370.8L387.2 397.3M230.7 270.0L258.5 266.7M300.8 164.0L304.2 154.4M286.2 263.3L314.0 260.0M265.9 365.7L269.4 356.0M235.0 125.7L238.5 116.1M235.6 296.6L268.1 319.8M283.8 383.2L311.6 379.8M385.4 242.8L388.9 233.1M195.7 366.6L200.6 393.2M251.9 404.3L279.7 401.0M367.1 373.2L365.7 337.0M310.4 217.2L315.2 243.7M276.8 83.8L308.0 70.8M325.2 96.4L356.5 83.4M301.0 90.1L304.5 80.4M331.7 404.0L359.4 400.6M388.9 233.1L392.4 223.5M327.3 177.0L359.9 200.2M266.2 112.7L269.8 103.1M304.5 80.4L308.0 70.8M320.0 270.3L352.6 293.5M321.4 359.0L324.9 349.4M392.9 341.8L397.7 368.3M321.8 106.1L349.5 102.7M285.1 100.7L317.6 123.9M397.7 368.3L401.2 358.7M274.2 330.1L279.0 356.6M364.0 182.4L367.5 172.8M314.0 260.0L346.6 283.2M209.0 283.6L236.8 280.3M361.8 228.3L366.6 254.9M206.6 137.2L234.4 133.9M289.9 127.2L317.6 123.9M321.8 106.1L325.2 96.4M350.0 221.1L353.5 211.4M362.9 391.0L390.7 387.7M345.4 120.5L378.0 143.8M335.2 394.3L338.7 384.7M375.8 189.7L374.5 153.4M244.9 423.6L276.2 410.6M378.0 143.8L382.8 170.3M389.4 351.4L392.9 341.8M366.4 381.3L394.2 378.0M293.4 436.3L324.7 423.3M179.5 132.4L183.0 122.7M176.5 260.4L204.2 257.0M335.5 141.4L340.3 167.9M396.4 332.1L395.1 295.9M358.3 238.0L361.8 228.3M394.2 378.0L392.9 341.8M276.6 210.2L281.4 236.8M256.1 386.5L283.8 383.2M322.5 150.4L355.0 173.7M245.2 170.7L276.5 157.7M252.2 151.4L255.8 141.7M357.4 320.1L360.9 310.4M369.9 371.7L401.2 358.7M332.0 151.0L336.8 177.6M363.1 264.5L361.8 228.3M327.3 177.0L332.1 203.6M280.2 74.1L285.1 100.7M380.6 216.2L385.4 242.8M339.0 131.7L342.5 122.1M260.9 413.1L265.7 439.6M224.8 80.8L257.3 104.0M262.4 375.3L290.2 372.0M318.2 115.7L321.8 106.1M388.1 315.2L392.9 341.8M377.6 344.2L382.4 370.8M304.2 154.4L307.8 144.7M335.8 67.4L363.5 64.1M309.2 233.5L336.9 230.1M279.7 401.0L307.4 397.6M204.2 257.0L232.0 253.7M364.7 226.8L397.2 250.0M316.4 406.4L348.9 429.6M357.0 201.7L361.8 228.3M276.5 157.7L280.0 148.0M369.5 253.4L397.2 250.0M346.5 230.7L351.3 257.3M235.6 296.6L263.3 293.2M380.4 342.7L383.9 333.0M179.5 132.4L207.2 129.1M271.8 183.7L304.4 206.9M218.7 336.7L251.2 359.9M361.3 110.0L364.8 100.3M210.2 446.3L237.9 442.9M329.7 323.4L357.4 320.1M199.4 230.5L204.2 257.0M366.1 136.5L364.8 100.3M297.2 352.7L300.7 343.0M350.2 147.1L355.0 173.7M342.2 375.0L369.9 371.7M352.7 346.0L356.2 336.4M285.1 100.7L312.8 97.3M345.1 194.5L348.6 184.8M293.4 436.3L296.9 426.6M351.3 257.3L350.0 221.1M220.7 417.3L224.2 407.6M227.1 227.1L259.7 250.4M233.1 416.4L265.7 439.6M372.7 317.6L376.2 308.0M262.8 122.4L266.2 112.7M376.2 308.0L381.1 334.5M207.2 129.1L235.0 125.7M217.8 100.1L245.5 96.7M194.6 203.9L227.1 227.1M350.0 221.1L348.6 184.8M297.5 99.7L301.0 90.1M360.0 73.8L364.8 100.3M282.6 220.5L315.2 243.7M237.9 442.9L265.7 439.6M294.7 153.8L327.3 177.0M231.2 388.3L262.4 375.3M348.9 429.6L352.4 420.0M287.5 247.0L315.2 243.7M162.0 180.7L194.6 203.9M353.0 93.1L357.8 119.6M234.7 378.7L265.9 365.7M262.1 130.5L289.9 127.2M365.7 337.0L364.4 300.7M379.7 298.3L383.2 288.7M197.0 84.1L201.8 110.6M205.4 419.7L210.2 446.3M384.6 324.9L389.4 351.4M252.2 151.4L280.0 148.0M359.1 155.9L362.6 146.2M403.4 312.8L406.9 303.1M195.7 366.6L228.3 389.8M348.6 184.8L352.1 175.2M176.0 142.0L179.5 132.4M353.5 211.4L358.3 238.0M364.8 100.3L368.3 90.7M288.6 409.7L316.4 406.4M341.7 256.7L374.3 279.9M376.7 426.3L375.4 390.1M310.4 217.2L343.0 240.4M251.2 359.9L279.0 356.6M343.0 240.4L341.6 204.2M352.4 420.0L355.9 410.3M210.8 119.4L242.0 106.4M214.2 109.7L217.8 100.1M352.6 293.5L356.1 283.8M340.3 167.9L343.8 158.3M392.9 341.8L396.4 332.1M359.6 274.2L364.4 300.7M200.2 148.4L203.8 138.7M346.6 283.2L374.3 279.9M391.6 305.6L390.2 269.3M382.4 370.8L385.9 361.1M354.3 129.3L357.8 119.6M375.4 390.1L378.9 380.4M304.2 154.4L335.5 141.4M352.4 420.0L380.2 416.6M379.1 306.5L383.9 333.0M361.8 228.3L365.3 218.6M196.8 158.0L228.0 145.0M328.5 160.7L333.3 187.3M292.3 273.6L324.9 296.8M374.1 353.9L377.6 344.2M287.0 128.7L314.8 125.4M283.8 383.2L288.6 409.7M360.9 310.4L365.7 337.0M380.2 416.6L378.9 380.4M262.1 130.5L267.0 157.1M264.5 276.9L297.1 300.2M366.6 254.9L365.3 218.6M355.0 173.7L387.6 196.9M366.4 381.3L397.7 368.3M361.3 110.0L360.0 73.8M181.3 286.9L186.1 313.5M310.9 388.0L338.7 384.7M300.8 164.0L305.6 190.6M300.4 417.0L331.7 404.0M351.4 309.8L383.9 333.0M251.2 359.9L256.1 386.5M244.0 187.0L271.8 183.7M252.5 77.4L285.1 100.7M269.8 103.1L301.0 90.1M225.9 243.4L258.5 266.7M248.4 414.0L276.2 410.6M224.2 407.6L227.7 398.0M290.2 372.0L321.4 359.0M328.2 413.6L331.7 404.0M281.4 236.8L314.0 260.0M356.5 83.4L361.3 110.0M332.1 203.6L359.9 200.2M388.9 233.1L393.7 259.7M279.0 356.6L311.6 379.8M356.2 336.4L383.9 333.0M290.5 119.1L321.8 106.1M273.2 93.4L276.8 83.8M265.7 439.6L293.4 436.3M362.2 346.6L365.7 337.0M242.0 106.4L269.8 103.1M388.1 315.2L391.6 305.6M301.0 90.1L328.8 86.8M346.0 112.4L349.5 102.7M233.1 416.4L260.9 413.1M241.6 306.8L274.2 330.1M248.8 161.0L276.5 157.7M385.9 361.1L390.7 387.7M289.9 127.2L294.7 153.8M345.7 365.3L373.4 362.0M393.7 259.7L398.6 286.2M328.8 86.8L332.2 77.1M357.0 201.7L360.5 192.1M246.4 333.4L274.2 330.1M294.7 153.8L322.5 150.4M200.6 393.2L205.4 419.7M244.9 423.6L248.4 414.0M369.6 126.9L368.3 90.7M162.0 180.7L189.8 177.3M287.5 247.0L292.3 273.6M359.4 400.6L387.2 397.3M253.7 240.1L258.5 266.7M355.6 165.5L354.3 129.3M357.8 119.6L362.6 146.2M234.4 133.9L267.0 157.1M373.4 362.0L401.2 358.7M373.1 117.2L378.0 143.8M206.6 137.2L211.5 163.8M186.5 113.1L190.0 103.4M387.2 397.3L385.9 361.1M304.4 206.9L309.2 233.5M359.1 155.9L357.8 119.6M403.4 312.8L402.1 276.6M303.9 407.3L335.2 394.3M380.4 342.7L411.7 329.7M312.8 97.3L317.6 123.9M239.2 160.4L267.0 157.1M354.8 247.6L359.6 274.2M341.7 256.7L369.5 253.4M379.3 180.0L382.8 170.3M217.5 174.0L250.1 197.2M240.4 323.1L245.2 349.7M203.8 138.7L231.5 135.4M265.7 439.6L296.9 426.6M231.5 135.4L262.8 122.4M384.1 206.6L382.8 170.3M349.2 355.7L380.4 342.7M346.6 283.2L351.4 309.8M222.3 200.6L250.1 197.2M207.2 129.1L238.5 116.1M333.3 187.3L336.8 177.6M381.1 334.5L379.7 298.3M259.7 250.4L264.5 276.9M197.0 84.1L224.8 80.8M190.9 340.0L223.5 363.3M288.6 409.7L293.4 436.3M328.4 339.7L356.2 336.4M401.2 358.7L399.9 322.5M273.0 167.4L277.8 193.9M356.1 283.8L354.8 247.6M332.2 77.1L335.8 67.4M162.0 180.7L193.2 167.7M291.1 289.9L318.8 286.6M213.7 436.6L244.9 423.6M350.8 139.0L349.5 102.7M341.6 204.2L346.5 230.7M257.3 104.0L262.1 130.5M390.2 269.3L388.9 233.1M252.5 77.4L280.2 74.1M372.3 199.3L375.8 189.7M370.6 363.5L374.1 353.9M276.5 157.7L304.2 154.4M276.8 83.8L304.5 80.4M371.9 399.7L370.6 363.5M348.9 429.6L380.2 416.6M272.7 420.3L300.4 417.0M248.8 213.6L253.7 240.1M317.6 123.9L350.2 147.1M369.2 327.3L372.7 317.6M205.4 419.7L237.9 442.9M241.6 306.8L269.4 303.5M335.8 67.4L340.6 94.0M307.4 397.6L338.7 384.7M350.0 221.1L354.8 247.6M176.0 142.0L207.2 129.1M398.6 286.2L403.4 312.8M246.4 333.4L251.2 359.9M352.4 420.0L383.7 407.0M199.4 230.5L227.1 227.1M318.8 286.6L351.4 309.8M251.9 404.3L255.4 394.6M214.2 109.7L242.0 106.4M190.0 103.4L193.5 93.7M280.2 74.1L312.8 97.3M346.5 230.7L350.0 221.1M351.3 257.3L356.1 283.8M323.6 313.1L351.4 309.8M244.9 423.6L272.7 420.3M263.3 293.2L268.1 319.8M383.7 407.0L387.2 397.3M379.1 306.5L411.7 329.7M306.7 353.3L311.6 379.8M301.9 326.7L334.5 350.0M379.3 180.0L378.0 143.8M339.3 376.5L371.9 399.7M181.3 286.9L213.8 310.1M363.5 64.1L368.3 90.7M300.8 164.0L333.3 187.3M369.9 371.7L397.7 368.3M374.9 271.8L378.4 262.1M344.1 403.1L371.9 399.7M378.4 262.1L381.9 252.4M224.2 407.6L255.4 394.6M210.8 119.4L214.2 109.7M343.8 158.3L347.3 148.6M393.7 259.7L397.2 250.0M258.5 266.7L291.1 289.9M229.6 107.3L262.1 130.5M248.8 161.0L280.0 148.0M273.0 167.4L276.5 157.7M385.9 361.1L389.4 351.4M352.6 293.5L357.4 320.1M340.6 94.0L345.4 120.5M347.3 148.6L350.8 139.0M172.5 151.7L176.0 142.0M286.2 263.3L291.1 289.9M354.3 129.3L359.1 155.9M294.0 109.4L321.8 106.1M196.8 158.0L200.2 148.4" stroke="#000000"/><path d="M48 192h5v5h-5zM53 218h5v5h-5zM58 245h5v5h-5zM63 271h5v5h-5zM68 298h5v5h-5zM73 324h5v5h-5zM77 351h5v5h-5zM82 377h5v5h-5zM87 404h5v5h-5zM92 431h5v5h-5zM97 457h5v5h-5zM52 182h5v5h-5zM57 208h5v5h-5zM62 235h5v5h-5zM66 262h5v5h-5zM71 288h5v5h-5zM76 315h5v5h-5zM81 341h5v5h-5zM86 368h5v5h-5zM91 394h5v5h-5zM95 421h5v5h-5zM100 447h5v5h-5zM56 172h5v5h-5zM60 199h5v5h-5zM65 225h5v5h-5zM70 252h5v5h-5zM75 278h5v5h-5zM80 305h5v5h-5zM84 332h5v5h-5zM89 358h5v5h-5zM94 385h5v5h-5zM99 411h5v5h-5zM104 438h5v5h-5zM59 163h5v5h-5zM64 189h5v5h-5zM69 216h5v5h-5zM73 242h5v5h-5zM78 269h5v5h-5zM83 295h5v5h-5zM88 322h5v5h-5zM93 348h5v5h-5zM98 375h5v5h-5zM102 402h5v5h-5zM107 428h5v5h-5zM62 153h5v5h-5zM67 179h5v5h-5zM72 206h5v5h-5zM77 233h5v5h-5zM82 259h5v5h-5zM87 286h5v5h-5zM91 312h5v5h-5zM96 339h5v5h-5zM101 365h5v5h-5zM106 392h5v5h-5zM111 418h5v5h-5zM66 143h5v5h-5zM71 170h5v5h-5zM76 196h5v5h-5zM80 223h5v5h-5zM85 249h5v5h-5zM90 276h5v5h-5zM95 303h5v5h-5zM100 329h5v5h-5zM105 356h5v5h-5zM109 382h5v5h-5zM114 409h5v5h-5zM70 134h5v5h-5zM74 160h5v5h-5zM79 187h5v5h-5zM84 213h5v5h-5zM89 240h5v5h-5zM94 266h5v5h-5zM98 293h5v5h-5zM103 319h5v5h-5zM108 346h5v5h-5zM113 373h5v5h-5zM118 399h5v5h-5zM73 124h5v5h-5zM78 150h5v5h-5zM83 177h5v5h-5zM87 204h5v5h-5zM92 230h5v5h-5zM97 257h5v5h-5zM102 283h5v5h-5zM107 310h5v5h-5zM112 336h5v5h-5zM116 363h5v5h-5zM121 389h5v5h-5zM76 114h5v5h-5zM81 141h5v5h-5zM86 167h5v5h-5zM91 194h5v5h-5zM96 220h5v5h-5zM101 247h5v5h-5zM105 274h5v5h-5zM110 300h5v5h-5zM115 327h5v5h-5zM120 353h5v5h-5zM125 380h5v5h-5zM80 105h5v5h-5zM85 131h5v5h-5zM90 158h5v5h-5zM94 184h5v5h-5zM99 211h5v5h-5zM104 237h5v5h-5zM109 264h5v5h-5zM114 290h5v5h-5zM119 317h5v5h-5zM123 344h5v5h-5zM128 370h5v5h-5zM84 95h5v5h-5zM88 121h5v5h-5zM93 148h5v5h-5zM98 175h5v5h-5zM103 201h5v5h-5zM108 228h5v5h-5zM112 254h5v5h-5zM117 281h5v5h-5zM122 307h5v5h-5zM127 334h5v5h-5zM132 360h5v5h-5z" fill="#006bff" stroke="none"/><path d="M76 188h5v5h-5zM81 215h5v5h-5zM86 241h5v5h-5zM91 268h5v5h-5zM96 294h5v5h-5zM100 321h5v5h-5zM105 348h5v5h-5zM110 374h5v5h-5zM115 401h5v5h-5zM120 427h5v5h-5zM124 454h5v5h-5zM80 179h5v5h-5zM85 205h5v5h-5zM89 232h5v5h-5zM94 258h5v5h-5zM99 285h5v5h-5zM104 311h5v5h-5zM109 338h5v5h-5zM113 364h5v5h-5zM118 391h5v5h-5zM123 418h5v5h-5zM128 444h5v5h-5zM83 169h5v5h-5zM88 195h5v5h-5zM93 222h5v5h-5zM98 249h5v5h-5zM103 275h5v5h-5zM107 302h5v5h-5zM112 328h5v5h-5zM117 355h5v5h-5zM122 381h5v5h-5zM127 408h5v5h-5zM131 434h5v5h-5zM87 159h5v5h-5zM92 186h5v5h-5zM96 212h5v5h-5zM101 239h5v5h-5zM106 265h5v5h-5zM111 292h5v5h-5zM116 319h5v5h-5zM120 345h5v5h-5zM125 372h5v5h-5zM130 398h5v5h-5zM135 425h5v5h-5zM90 150h5v5h-5zM95 176h5v5h-5zM100 203h5v5h-5zM105 229h5v5h-5zM110 256h5v5h-5zM114 282h5v5h-5zM119 309h5v5h-5zM124 335h5v5h-5zM129 362h5v5h-5zM134 389h5v5h-5zM138 415h5v5h-5zM94 140h5v5h-5zM99 166h5v5h-5zM103 193h5v5h-5zM108 220h5v5h-5zM113 246h5v5h-5zM118 273h5v5h-5zM123 299h5v5h-5zM127 326h5v5h-5zM132 352h5v5h-5zM137 379h5v5h-5zM142 405h5v5h-5zM97 130h5v5h-5zM102 157h5v5h-5zM107 183h5v5h-5zM112 210h5v5h-5zM117 236h5v5h-5zM121 263h5v5h-5zM126 290h5v5h-5zM131 316h5v5h-5zM136 343h5v5h-5zM141 369h5v5h-5zM145 396h5v5h-5zM101 121h5v5h-5zM106 147h5v5h-5zM110 174h5v5h-5zM115 200h5v5h-5zM120 227h5v5h-5zM125 253h5v5h-5zM130 280h5v5h-5zM134 306h5v5h-5zM139 333h5v5h-5zM144 360h5v5h-5zM149 386h5v5h-5zM104 111h5v5h-5zM109 137h5v5h-5zM114 164h5v5h-5zM119 191h5v5h-5zM124 217h5v5h-5zM128 244h5v5h-5zM133 270h5v5h-5zM138 297h5v5h-5zM143 323h5v5h-5zM148 350h5v5h-5zM152 376h5v5h-5zM108 101h5v5h-5zM113 128h5v5h-5zM117 154h5v5h-5zM122 181h5v5h-5zM127 207h5v5h-5zM132 234h5v5h-5zM137 261h5v5h-5zM141 287h5v5h-5zM146 314h5v5h-5zM151 340h5v5h-5zM156 367h5v5h-5zM111 92h5v5h-5zM116 118h5v5h-5zM121 145h5v5h-5zM126 171h5v5h-5zM131 198h5v5h-5zM135 224h5v5h-5zM140 251h5v5h-5zM145 277h5v5h-5zM150 304h5v5h-5zM155 331h5v5h-5zM159 357h5v5h-5z" fill="#0000e1" stroke="none"/><path d="M104 185h5v5h-5zM109 211h5v5h-5zM114 238h5v5h-5zM118 265h5v5h-5zM123 291h5v5h-5zM128 318h5v5h-5zM133 344h5v5h-5zM138 371h5v5h-5zM143 397h5v5h-5zM147 424h5v5h-5zM152 450h5v5h-5zM108 175h5v5h-5zM112 202h5v5h-5zM117 228h5v5h-5zM122 255h5v5h-5zM127 281h5v5h-5zM132 308h5v5h-5zM136 335h5v5h-5zM141 361h5v5h-5zM146 388h5v5h-5zM151 414h5v5h-5zM156 441h5v5h-5zM111 166h5v5h-5zM116 192h5v5h-5zM121 219h5v5h-5zM125 245h5v5h-5zM130 272h5v5h-5zM135 298h5v5h-5zM140 325h5v5h-5zM145 351h5v5h-5zM150 378h5v5h-5zM154 405h5v5h-5zM159 431h5v5h-5zM114 156h5v5h-5zM119 182h5v5h-5zM124 209h5v5h-5zM129 236h5v5h-5zM134 262h5v5h-5zM139 289h5v5h-5zM143 315h5v5h-5zM148 342h5v5h-5zM153 368h5v5h-5zM158 395h5v5h-5zM163 421h5v5h-5zM118 146h5v5h-5zM123 173h5v5h-5zM128 199h5v5h-5zM132 226h5v5h-5zM137 252h5v5h-5zM142 279h5v5h-5zM147 306h5v5h-5zM152 332h5v5h-5zM157 359h5v5h-5zM161 385h5v5h-5zM166 412h5v5h-5zM122 137h5v5h-5zM126 163h5v5h-5zM131 190h5v5h-5zM136 216h5v5h-5zM141 243h5v5h-5zM146 269h5v5h-5zM150 296h5v5h-5zM155 322h5v5h-5zM160 349h5v5h-5zM165 376h5v5h-5zM170 402h5v5h-5zM125 127h5v5h-5zM130 153h5v5h-5zM135 180h5v5h-5zM139 207h5v5h-5zM144 233h5v5h-5zM149 260h5v5h-5zM154 286h5v5h-5zM159 313h5v5h-5zM164 339h5v5h-5zM168 366h5v5h-5zM173 392h5v5h-5zM128 117h5v5h-5zM133 144h5v5h-5zM138 170h5v5h-5zM143 197h5v5h-5zM148 223h5v5h-5zM153 250h5v5h-5zM157 277h5v5h-5zM162 303h5v5h-5zM167 330h5v5h-5zM172 356h5v5h-5zM177 383h5v5h-5zM132 108h5v5h-5zM137 134h5v5h-5zM142 161h5v5h-5zM146 187h5v5h-5zM151 214h5v5h-5zM156 240h5v5h-5zM161 267h5v5h-5zM166 293h5v5h-5zM171 320h5v5h-5zM175 347h5v5h-5zM180 373h5v5h-5zM136 98h5v5h-5zM140 124h5v5h-5zM145 151h5v5h-5zM150 178h5v5h-5zM155 204h5v5h-5zM160 231h5v5h-5zM164 257h5v5h-5zM169 284h5v5h-5zM174 310h5v5h-5zM179 337h5v5h-5zM184 364h5v5h-5zM139 88h5v5h-5zM144 115h5v5h-5zM149 141h5v5h-5zM153 168h5v5h-5zM158 194h5v5h-5zM163 221h5v5h-5zM168 248h5v5h-5zM173 274h5v5h-5zM178 301h5v5h-5zM182 327h5v5h-5zM187 354h5v5h-5z" fill="#00004b" stroke="none"/><path d="M132 182h5v5h-5zM137 208h5v5h-5zM141 235h5v5h-5zM146 261h5v5h-5zM151 288h5v5h-5zM156 314h5v5h-5zM161 341h5v5h-5zM165 367h5v5h-5zM170 394h5v5h-5zM175 421h5v5h-5zM180 447h5v5h-5zM135 172h5v5h-5zM140 198h5v5h-5zM145 225h5v5h-5zM150 252h5v5h-5zM155 278h5v5h-5zM159 305h5v5h-5zM164 331h5v5h-5zM169 358h5v5h-5zM174 384h5v5h-5zM179 411h5v5h-5zM183 437h5v5h-5zM139 162h5v5h-5zM144 189h5v5h-5zM148 215h5v5h-5zM153 242h5v5h-5zM158 268h5v5h-5zM163 295h5v5h-5zM168 322h5v5h-5zM172 348h5v5h-5zM177 375h5v5h-5zM182 401h5v5h-5zM187 428h5v5h-5zM142 153h5v5h-5zM147 179h5v5h-5zM152 206h5v5h-5zM157 232h5v5h-5zM162 259h5v5h-5zM166 285h5v5h-5zM171 312h5v5h-5zM176 338h5v5h-5zM181 365h5v5h-5zM186 392h5v5h-5zM190 418h5v5h-5zM146 143h5v5h-5zM151 169h5v5h-5zM155 196h5v5h-5zM160 223h5v5h-5zM165 249h5v5h-5zM170 276h5v5h-5zM175 302h5v5h-5zM179 329h5v5h-5zM184 355h5v5h-5zM189 382h5v5h-5zM194 408h5v5h-5zM149 133h5v5h-5zM154 160h5v5h-5zM159 186h5v5h-5zM164 213h5v5h-5zM169 239h5v5h-5zM173 266h5v5h-5zM178 293h5v5h-5zM183 319h5v5h-5zM188 346h5v5h-5zM193 372h5v5h-5zM197 399h5v5h-5zM153 124h5v5h-5zM158 150h5v5h-5zM162 177h5v5h-5zM167 203h5v5h-5zM172 230h5v5h-5zM177 256h5v5h-5zM182 283h5v5h-5zM186 309h5v5h-5zM191 336h5v5h-5zM196 363h5v5h-5zM201 389h5v5h-5zM156 114h5v5h-5zM161 140h5v5h-5zM166 167h5v5h-5zM171 194h5v5h-5zM176 220h5v5h-5zM180 247h5v5h-5zM185 273h5v5h-5zM190 300h5v5h-5zM195 326h5v5h-5zM200 353h5v5h-5zM204 379h5v5h-5zM160 104h5v5h-5zM165 131h5v5h-5zM169 157h5v5h-5zM174 184h5v5h-5zM179 210h5v5h-5zM184 237h5v5h-5zM189 264h5v5h-5zM193 290h5v5h-5zM198 317h5v5h-5zM203 343h5v5h-5zM208 370h5v5h-5zM163 95h5v5h-5zM168 121h5v5h-5zM173 148h5v5h-5zM178 174h5v5h-5zM183 201h5v5h-5zM187 227h5v5h-5zM192 254h5v5h-5zM197 280h5v5h-5zM202 307h5v5h-5zM207 334h5v5h-5zM211 360h5v5h-5zM167 85h5v5h-5zM172 111h5v5h-5zM176 138h5v5h-5zM181 165h5v5h-5zM186 191h5v5h-5zM191 218h5v5h-5zM196 244h5v5h-5zM200 271h5v5h-5zM205 297h5v5h-5zM210 324h5v5h-5zM215 351h5v5h-5z" fill="#00000f" stroke="none"/><path d="M160 178h5v5h-5zM164 205h5v5h-5zM169 231h5v5h-5zM174 258h5v5h-5zM179 284h5v5h-5zM184 311h5v5h-5zM188 338h5v5h-5zM193 364h5v5h-5zM198 391h5v5h-5zM203 417h5v5h-5zM208 444h5v5h-5zM163 169h5v5h-5zM168 195h5v5h-5zM173 222h5v5h-5zM177 248h5v5h-5zM182 275h5v5h-5zM187 301h5v5h-5zM192 328h5v5h-5zM197 354h5v5h-5zM202 381h5v5h-5zM206 408h5v5h-5zM211 434h5v5h-5zM166 159h5v5h-5zM171 185h5v5h-5zM176 212h5v5h-5zM181 239h5v5h-5zM186 265h5v5h-5zM191 292h5v5h-5zM195 318h5v5h-5zM200 345h5v5h-5zM205 371h5v5h-5zM210 398h5v5h-5zM215 424h5v5h-5zM170 149h5v5h-5zM175 176h5v5h-5zM180 202h5v5h-5zM184 229h5v5h-5zM189 255h5v5h-5zM194 282h5v5h-5zM199 309h5v5h-5zM204 335h5v5h-5zM209 362h5v5h-5zM213 388h5v5h-5zM218 415h5v5h-5zM174 140h5v5h-5zM178 166h5v5h-5zM183 193h5v5h-5zM188 219h5v5h-5zM193 246h5v5h-5zM198 272h5v5h-5zM202 299h5v5h-5zM207 325h5v5h-5zM212 352h5v5h-5zM217 379h5v5h-5zM222 405h5v5h-5zM177 130h5v5h-5zM182 156h5v5h-5zM187 183h5v5h-5zM191 210h5v5h-5zM196 236h5v5h-5zM201 263h5v5h-5zM206 289h5v5h-5zM211 316h5v5h-5zM216 342h5v5h-5zM220 369h5v5h-5zM225 395h5v5h-5zM180 120h5v5h-5zM185 147h5v5h-5zM190 173h5v5h-5zM195 200h5v5h-5zM200 226h5v5h-5zM205 253h5v5h-5zM209 280h5v5h-5zM214 306h5v5h-5zM219 333h5v5h-5zM224 359h5v5h-5zM229 386h5v5h-5zM184 111h5v5h-5zM189 137h5v5h-5zM194 164h5v5h-5zM198 190h5v5h-5zM203 217h5v5h-5zM208 243h5v5h-5zM213 270h5v5h-5zM218 296h5v5h-5zM223 323h5v5h-5zM227 350h5v5h-5zM232 376h5v5h-5zM188 101h5v5h-5zM192 127h5v5h-5zM197 154h5v5h-5zM202 181h5v5h-5zM207 207h5v5h-5zM212 234h5v5h-5zM216 260h5v5h-5zM221 287h5v5h-5zM226 313h5v5h-5zM231 340h5v5h-5zM236 366h5v5h-5zM191 91h5v5h-5zM196 118h5v5h-5zM201 144h5v5h-5zM205 171h5v5h-5zM210 197h5v5h-5zM215 224h5v5h-5zM220 251h5v5h-5zM225 277h5v5h-5zM230 304h5v5h-5zM234 330h5v5h-5zM239 357h5v5h-5zM194 82h5v5h-5zM199 108h5v5h-5zM204 135h5v5h-5zM209 161h5v5h-5zM214 188h5v5h-5zM219 214h5v5h-5zM223 241h5v5h-5zM228 268h5v5h-5zM233 294h5v5h-5zM238 321h5v5h-5zM243 347h5v5h-5zM187 175h5v5h-5zM192 201h5v5h-5zM197 228h5v5h-5zM202 255h5v5h-5zM207 281h5v5h-5zM211 308h5v5h-5zM216 334h5v5h-5zM221 361h5v5h-5zM226 387h5v5h-5zM231 414h5v5h-5zM235 440h5v5h-5zM191 165h5v5h-5zM196 192h5v5h-5zM200 218h5v5h-5zM205 245h5v5h-5zM210 271h5v5h-5zM215 298h5v5h-5zM220 325h5v5h-5zM224 351h5v5h-5zM229 378h5v5h-5zM234 404h5v5h-5zM239 431h5v5h-5zM194 156h5v5h-5zM199 182h5v5h-5zM204 209h5v5h-5zM209 235h5v5h-5zM214 262h5v5h-5zM218 288h5v5h-5zM223 315h5v5h-5zM228 341h5v5h-5zM233 368h5v5h-5zM238 395h5v5h-5zM242 421h5v5h-5zM198 146h5v5h-5zM203 172h5v5h-5zM207 199h5v5h-5zM212 226h5v5h-5zM217 252h5v5h-5zM222 279h5v5h-5zM227 305h5v5h-5zM231 332h5v5h-5zM236 358h5v5h-5zM241 385h5v5h-5zM246 411h5v5h-5zM201 136h5v5h-5zM206 163h5v5h-5zM211 189h5v5h-5zM216 216h5v5h-5zM221 242h5v5h-5zM225 269h5v5h-5zM230 296h5v5h-5zM235 322h5v5h-5zM240 349h5v5h-5zM245 375h5v5h-5zM249 402h5v5h-5zM205 127h5v5h-5zM210 153h5v5h-5zM214 180h5v5h-5zM219 206h5v5h-5zM224 233h5v5h-5zM229 259h5v5h-5zM234 286h5v5h-5zM238 312h5v5h-5zM243 339h5v5h-5zM248 366h5v5h-5zM253 392h5v5h-5zM208 117h5v5h-5zM213 143h5v5h-5zM218 170h5v5h-5zM223 197h5v5h-5zM228 223h5v5h-5zM232 250h5v5h-5zM237 276h5v5h-5zM242 303h5v5h-5zM247 329h5v5h-5zM252 356h5v5h-5zM256 382h5v5h-5zM212 107h5v5h-5zM217 134h5v5h-5zM221 160h5v5h-5zM226 187h5v5h-5zM231 213h5v5h-5zM236 240h5v5h-5zM241 267h5v5h-5zM245 293h5v5h-5zM250 320h5v5h-5zM255 346h5v5h-5zM260 373h5v5h-5zM215 98h5v5h-5zM220 124h5v5h-5zM225 151h5v5h-5zM230 177h5v5h-5zM235 204h5v5h-5zM239 230h5v5h-5zM244 257h5v5h-5zM249 283h5v5h-5zM254 310h5v5h-5zM259 337h5v5h-5zM263 363h5v5h-5zM219 88h5v5h-5zM224 114h5v5h-5zM228 141h5v5h-5zM233 168h5v5h-5zM238 194h5v5h-5zM243 221h5v5h-5zM248 247h5v5h-5zM252 274h5v5h-5zM257 300h5v5h-5zM262 327h5v5h-5zM267 354h5v5h-5zM222 78h5v5h-5zM227 105h5v5h-5zM232 131h5v5h-5zM237 158h5v5h-5zM242 184h5v5h-5zM246 211h5v5h-5zM251 238h5v5h-5zM256 264h5v5h-5zM261 291h5v5h-5zM266 317h5v5h-5zM270 344h5v5h-5zM215 172h5v5h-5zM220 198h5v5h-5zM225 225h5v5h-5zM229 251h5v5h-5zM234 278h5v5h-5zM239 304h5v5h-5zM244 331h5v5h-5zM249 357h5v5h-5zM254 384h5v5h-5zM258 411h5v5h-5zM263 437h5v5h-5zM218 162h5v5h-5zM223 188h5v5h-5zM228 215h5v5h-5zM233 242h5v5h-5zM238 268h5v5h-5zM243 295h5v5h-5zM247 321h5v5h-5zM252 348h5v5h-5zM257 374h5v5h-5zM262 401h5v5h-5zM267 427h5v5h-5zM222 152h5v5h-5zM227 179h5v5h-5zM232 205h5v5h-5zM236 232h5v5h-5zM241 258h5v5h-5zM246 285h5v5h-5zM251 312h5v5h-5zM256 338h5v5h-5zM261 365h5v5h-5zM265 391h5v5h-5zM270 418h5v5h-5zM226 143h5v5h-5zM230 169h5v5h-5zM235 196h5v5h-5zM240 222h5v5h-5zM245 249h5v5h-5zM250 275h5v5h-5zM254 302h5v5h-5zM259 328h5v5h-5zM264 355h5v5h-5zM269 382h5v5h-5zM274 408h5v5h-5zM229 133h5v5h-5zM234 159h5v5h-5zM239 186h5v5h-5zM243 213h5v5h-5zM248 239h5v5h-5zM253 266h5v5h-5zM258 292h5v5h-5zM263 319h5v5h-5zM268 345h5v5h-5zM272 372h5v5h-5zM277 398h5v5h-5zM232 123h5v5h-5zM237 150h5v5h-5zM242 176h5v5h-5zM247 203h5v5h-5zM252 229h5v5h-5zM257 256h5v5h-5zM261 283h5v5h-5zM266 309h5v5h-5zM271 336h5v5h-5zM276 362h5v5h-5zM281 389h5v5h-5zM236 114h5v5h-5zM241 140h5v5h-5zM246 167h5v5h-5zM250 193h5v5h-5zM255 220h5v5h-5zM260 246h5v5h-5zM265 273h5v5h-5zM270 299h5v5h-5zM275 326h5v5h-5zM279 353h5v5h-5zM284 379h5v5h-5zM240 104h5v5h-5zM244 130h5v5h-5zM249 157h5v5h-5zM254 184h5v5h-5zM259 210h5v5h-5zM264 237h5v5h-5zM268 263h5v5h-5zM273 290h5v5h-5zM278 316h5v5h-5zM283 343h5v5h-5zM288 370h5v5h-5zM243 94h5v5h-5zM248 121h5v5h-5zM253 147h5v5h-5zM257 174h5v5h-5zM262 200h5v5h-5zM267 227h5v5h-5zM272 254h5v5h-5zM277 280h5v5h-5zM282 307h5v5h-5zM286 333h5v5h-5zM291 360h5v5h-5zM246 85h5v5h-5zM251 111h5v5h-5zM256 138h5v5h-5zM261 164h5v5h-5zM266 191h5v5h-5zM271 217h5v5h-5zM275 244h5v5h-5zM280 270h5v5h-5zM285 297h5v5h-5zM290 324h5v5h-5zM295 350h5v5h-5zM250 75h5v5h-5zM255 101h5v5h-5zM260 128h5v5h-5zM264 155h5v5h-5zM269 181h5v5h-5zM274 208h5v5h-5zM279 234h5v5h-5zM284 261h5v5h-5zM289 287h5v5h-5zM293 314h5v5h-5zM298 341h5v5h-5zM243 168h5v5h-5zM248 195h5v5h-5zM252 221h5v5h-5zM257 248h5v5h-5zM262 274h5v5h-5zM267 301h5v5h-5zM272 328h5v5h-5zM276 354h5v5h-5zM281 381h5v5h-5zM286 407h5v5h-5zM291 434h5v5h-5zM246 159h5v5h-5zM251 185h5v5h-5zM256 212h5v5h-5zM261 238h5v5h-5zM266 265h5v5h-5zM270 291h5v5h-5zM275 318h5v5h-5zM280 344h5v5h-5zM285 371h5v5h-5zM290 398h5v5h-5zM294 424h5v5h-5zM250 149h5v5h-5zM255 175h5v5h-5zM259 202h5v5h-5zM264 229h5v5h-5zM269 255h5v5h-5zM274 282h5v5h-5zM279 308h5v5h-5zM283 335h5v5h-5zM288 361h5v5h-5zM293 388h5v5h-5zM298 414h5v5h-5zM253 139h5v5h-5zM258 166h5v5h-5zM263 192h5v5h-5zM268 219h5v5h-5zM273 245h5v5h-5zM277 272h5v5h-5zM282 299h5v5h-5zM287 325h5v5h-5zM292 352h5v5h-5zM297 378h5v5h-5zM301 405h5v5h-5zM257 130h5v5h-5zM262 156h5v5h-5zM266 183h5v5h-5zM271 209h5v5h-5zM276 236h5v5h-5zM281 262h5v5h-5zM286 289h5v5h-5zM290 315h5v5h-5zM295 342h5v5h-5zM300 369h5v5h-5zM305 395h5v5h-5zM260 120h5v5h-5zM265 146h5v5h-5zM270 173h5v5h-5zM275 200h5v5h-5zM280 226h5v5h-5zM284 253h5v5h-5zM289 279h5v5h-5zM294 306h5v5h-5zM299 332h5v5h-5zM304 359h5v5h-5zM308 385h5v5h-5zM264 110h5v5h-5zM269 137h5v5h-5zM273 163h5v5h-5zM278 190h5v5h-5zM283 216h5v5h-5zM288 243h5v5h-5zM293 270h5v5h-5zM297 296h5v5h-5zM302 323h5v5h-5zM307 349h5v5h-5zM312 376h5v5h-5zM267 101h5v5h-5zM272 127h5v5h-5zM277 154h5v5h-5zM282 180h5v5h-5zM287 207h5v5h-5zM291 233h5v5h-5zM296 260h5v5h-5zM301 286h5v5h-5zM306 313h5v5h-5zM311 340h5v5h-5zM315 366h5v5h-5zM271 91h5v5h-5zM276 117h5v5h-5zM280 144h5v5h-5zM285 171h5v5h-5zM290 197h5v5h-5zM295 224h5v5h-5zM300 250h5v5h-5zM304 277h5v5h-5zM309 303h5v5h-5zM314 330h5v5h-5zM319 357h5v5h-5zM274 81h5v5h-5zM279 108h5v5h-5zM284 134h5v5h-5zM289 161h5v5h-5zM294 187h5v5h-5zM298 214h5v5h-5zM303 241h5v5h-5zM308 267h5v5h-5zM313 294h5v5h-5zM318 320h5v5h-5zM322 347h5v5h-5zM278 72h5v5h-5zM283 98h5v5h-5zM287 125h5v5h-5zM292 151h5v5h-5zM297 178h5v5h-5zM302 204h5v5h-5zM307 231h5v5h-5zM311 258h5v5h-5zM316 284h5v5h-5zM321 311h5v5h-5zM326 337h5v5h-5zM270 165h5v5h-5zM275 191h5v5h-5zM280 218h5v5h-5zM285 245h5v5h-5zM290 271h5v5h-5zM295 298h5v5h-5zM299 324h5v5h-5zM304 351h5v5h-5zM309 377h5v5h-5zM314 404h5v5h-5zM319 430h5v5h-5zM274 155h5v5h-5zM279 182h5v5h-5zM284 208h5v5h-5zM288 235h5v5h-5zM293 261h5v5h-5zM298 288h5v5h-5zM303 315h5v5h-5zM308 341h5v5h-5zM313 368h5v5h-5zM317 394h5v5h-5zM322 421h5v5h-5zM278 146h5v5h-5zM282 172h5v5h-5zM287 199h5v5h-5zM292 225h5v5h-5zM297 252h5v5h-5zM302 278h5v5h-5zM306 305h5v5h-5zM311 331h5v5h-5zM316 358h5v5h-5zM321 385h5v5h-5zM326 411h5v5h-5zM281 136h5v5h-5zM286 162h5v5h-5zM291 189h5v5h-5zM295 216h5v5h-5zM300 242h5v5h-5zM305 269h5v5h-5zM310 295h5v5h-5zM315 322h5v5h-5zM320 348h5v5h-5zM324 375h5v5h-5zM329 401h5v5h-5zM284 126h5v5h-5zM289 153h5v5h-5zM294 179h5v5h-5zM299 206h5v5h-5zM304 232h5v5h-5zM309 259h5v5h-5zM313 286h5v5h-5zM318 312h5v5h-5zM323 339h5v5h-5zM328 365h5v5h-5zM333 392h5v5h-5zM288 117h5v5h-5zM293 143h5v5h-5zM298 170h5v5h-5zM302 196h5v5h-5zM307 223h5v5h-5zM312 249h5v5h-5zM317 276h5v5h-5zM322 302h5v5h-5zM327 329h5v5h-5zM331 356h5v5h-5zM336 382h5v5h-5zM292 107h5v5h-5zM296 133h5v5h-5zM301 160h5v5h-5zM306 187h5v5h-5zM311 213h5v5h-5zM316 240h5v5h-5zM320 266h5v5h-5zM325 293h5v5h-5zM330 319h5v5h-5zM335 346h5v5h-5zM340 372h5v5h-5zM295 97h5v5h-5zM300 124h5v5h-5zM305 150h5v5h-5zM309 177h5v5h-5zM314 203h5v5h-5zM319 230h5v5h-5zM324 257h5v5h-5zM329 283h5v5h-5zM334 310h5v5h-5zM338 336h5v5h-5zM343 363h5v5h-5zM298 88h5v5h-5zM303 114h5v5h-5zM308 141h5v5h-5zM313 167h5v5h-5zM318 194h5v5h-5zM323 220h5v5h-5zM327 247h5v5h-5zM332 274h5v5h-5zM337 300h5v5h-5zM342 327h5v5h-5zM347 353h5v5h-5zM302 78h5v5h-5zM307 104h5v5h-5zM312 131h5v5h-5zM316 158h5v5h-5zM321 184h5v5h-5zM326 211h5v5h-5zM331 237h5v5h-5zM336 264h5v5h-5zM341 290h5v5h-5zM345 317h5v5h-5zM350 344h5v5h-5zM306 68h5v5h-5zM310 95h5v5h-5zM315 121h5v5h-5zM320 148h5v5h-5zM325 174h5v5h-5zM330 201h5v5h-5zM334 228h5v5h-5zM339 254h5v5h-5zM344 281h5v5h-5zM349 307h5v5h-5zM354 334h5v5h-5zM298 162h5v5h-5zM303 188h5v5h-5zM308 215h5v5h-5zM313 241h5v5h-5zM318 268h5v5h-5zM322 294h5v5h-5zM327 321h5v5h-5zM332 347h5v5h-5zM337 374h5v5h-5zM342 401h5v5h-5zM346 427h5v5h-5zM302 152h5v5h-5zM307 178h5v5h-5zM311 205h5v5h-5zM316 232h5v5h-5zM321 258h5v5h-5zM326 285h5v5h-5zM331 311h5v5h-5zM335 338h5v5h-5zM340 364h5v5h-5zM345 391h5v5h-5zM350 417h5v5h-5zM305 142h5v5h-5zM310 169h5v5h-5zM315 195h5v5h-5zM320 222h5v5h-5zM325 248h5v5h-5zM329 275h5v5h-5zM334 302h5v5h-5zM339 328h5v5h-5zM344 355h5v5h-5zM349 381h5v5h-5zM353 408h5v5h-5zM309 133h5v5h-5zM314 159h5v5h-5zM318 186h5v5h-5zM323 212h5v5h-5zM328 239h5v5h-5zM333 265h5v5h-5zM338 292h5v5h-5zM342 318h5v5h-5zM347 345h5v5h-5zM352 372h5v5h-5zM357 398h5v5h-5zM312 123h5v5h-5zM317 149h5v5h-5zM322 176h5v5h-5zM327 203h5v5h-5zM332 229h5v5h-5zM336 256h5v5h-5zM341 282h5v5h-5zM346 309h5v5h-5zM351 335h5v5h-5zM356 362h5v5h-5zM360 388h5v5h-5zM316 113h5v5h-5zM321 140h5v5h-5zM325 166h5v5h-5zM330 193h5v5h-5zM335 219h5v5h-5zM340 246h5v5h-5zM345 273h5v5h-5zM349 299h5v5h-5zM354 326h5v5h-5zM359 352h5v5h-5zM364 379h5v5h-5zM319 104h5v5h-5zM324 130h5v5h-5zM329 157h5v5h-5zM334 183h5v5h-5zM339 210h5v5h-5zM343 236h5v5h-5zM348 263h5v5h-5zM353 289h5v5h-5zM358 316h5v5h-5zM363 343h5v5h-5zM367 369h5v5h-5zM323 94h5v5h-5zM328 120h5v5h-5zM332 147h5v5h-5zM337 174h5v5h-5zM342 200h5v5h-5zM347 227h5v5h-5zM352 253h5v5h-5zM356 280h5v5h-5zM361 306h5v5h-5zM366 333h5v5h-5zM371 360h5v5h-5zM326 84h5v5h-5zM331 111h5v5h-5zM336 137h5v5h-5zM341 164h5v5h-5zM346 190h5v5h-5zM350 217h5v5h-5zM355 244h5v5h-5zM360 270h5v5h-5zM365 297h5v5h-5zM370 323h5v5h-5zM374 350h5v5h-5zM330 75h5v5h-5zM335 101h5v5h-5zM339 128h5v5h-5zM344 154h5v5h-5zM349 181h5v5h-5zM354 207h5v5h-5zM359 234h5v5h-5zM363 261h5v5h-5zM368 287h5v5h-5zM373 314h5v5h-5zM378 340h5v5h-5zM333 65h5v5h-5zM338 91h5v5h-5zM343 118h5v5h-5zM348 145h5v5h-5zM353 171h5v5h-5zM357 198h5v5h-5zM362 224h5v5h-5zM367 251h5v5h-5zM372 277h5v5h-5zM377 304h5v5h-5zM381 331h5v5h-5zM326 158h5v5h-5zM331 185h5v5h-5zM336 211h5v5h-5zM340 238h5v5h-5zM345 264h5v5h-5zM350 291h5v5h-5zM355 318h5v5h-5zM360 344h5v5h-5zM365 371h5v5h-5zM369 397h5v5h-5zM374 424h5v5h-5zM330 149h5v5h-5zM334 175h5v5h-5zM339 202h5v5h-5zM344 228h5v5h-5zM349 255h5v5h-5zM354 281h5v5h-5zM358 308h5v5h-5zM363 334h5v5h-5zM368 361h5v5h-5zM373 388h5v5h-5zM378 414h5v5h-5zM333 139h5v5h-5zM338 165h5v5h-5zM343 192h5v5h-5zM347 219h5v5h-5zM352 245h5v5h-5zM357 272h5v5h-5zM362 298h5v5h-5zM367 325h5v5h-5zM372 351h5v5h-5zM376 378h5v5h-5zM381 404h5v5h-5zM336 129h5v5h-5zM341 156h5v5h-5zM346 182h5v5h-5zM351 209h5v5h-5zM356 235h5v5h-5zM361 262h5v5h-5zM365 289h5v5h-5zM370 315h5v5h-5zM375 342h5v5h-5zM380 368h5v5h-5zM385 395h5v5h-5zM340 120h5v5h-5zM345 146h5v5h-5zM350 173h5v5h-5zM354 199h5v5h-5zM359 226h5v5h-5zM364 252h5v5h-5zM369 279h5v5h-5zM374 305h5v5h-5zM379 332h5v5h-5zM383 359h5v5h-5zM388 385h5v5h-5zM344 110h5v5h-5zM348 136h5v5h-5zM353 163h5v5h-5zM358 190h5v5h-5zM363 216h5v5h-5zM368 243h5v5h-5zM372 269h5v5h-5zM377 296h5v5h-5zM382 322h5v5h-5zM387 349h5v5h-5zM392 376h5v5h-5zM347 100h5v5h-5zM352 127h5v5h-5zM357 153h5v5h-5zM361 180h5v5h-5zM366 206h5v5h-5zM371 233h5v5h-5zM376 260h5v5h-5zM381 286h5v5h-5zM386 313h5v5h-5zM390 339h5v5h-5zM395 366h5v5h-5zM350 91h5v5h-5zM355 117h5v5h-5zM360 144h5v5h-5zM365 170h5v5h-5zM370 197h5v5h-5zM375 223h5v5h-5zM379 250h5v5h-5zM384 276h5v5h-5zM389 303h5v5h-5zM394 330h5v5h-5zM399 356h5v5h-5zM354 81h5v5h-5zM359 107h5v5h-5zM364 134h5v5h-5zM368 161h5v5h-5zM373 187h5v5h-5zM378 214h5v5h-5zM383 240h5v5h-5zM388 267h5v5h-5zM393 293h5v5h-5zM397 320h5v5h-5zM402 347h5v5h-5zM358 71h5v5h-5zM362 98h5v5h-5zM367 124h5v5h-5zM372 151h5v5h-5zM377 178h5v5h-5zM382 204h5v5h-5zM386 231h5v5h-5zM391 257h5v5h-5zM396 284h5v5h-5zM401 310h5v5h-5zM406 337h5v5h-5zM361 62h5v5h-5zM366 88h5v5h-5zM371 115h5v5h-5zM375 141h5v5h-5zM380 168h5v5h-5zM385 194h5v5h-5zM390 221h5v5h-5zM395 248h5v5h-5zM400 274h5v5h-5zM404 301h5v5h-5zM409 327h5v5h-5z" fill="#000000" stroke="none"/></g></svg>
<svg class="a" style="left:144px;top:283px" width="14" height="20"><path d="M0.5 0.5V14.5L3.7 11.6L6 16.6L8 15.7L5.8 10.8H10.3z" fill="#fff" stroke="#b8b8b8" stroke-width=".8"/></svg>
<div style="left:461px;top:5px;width:352px;height:679px;border-radius:5px 5px 0 0;box-shadow:0 1px 7px rgba(0,0,0,.58);background:#a09d99"></div>
<div class="tb" style="left:461px;top:5px;width:352px;height:28px;background:linear-gradient(#4a4944,#3c3b37)"></div>
<div class="cb" style="left:473px;top:12px;width:15px;height:15px;background:radial-gradient(circle at 50% 35%,#f58458,#df5427 70%,#c84a20);box-shadow:0 0 0 1px #3a2820"></div>
<div class="cb" style="left:491px;top:12px;width:15px;height:15px;background:linear-gradient(#8a8983,#6a6963);box-shadow:0 0 0 1px #2e2d2a"></div>
<svg class="a" style="left:461px;top:5px" width="60" height="28"><g stroke="#3a2a22" stroke-width="1.2" fill="none"><path d="M16.8 11.8l5.4 5.4M22.2 11.8l-5.4 5.4"/><path d="M34.2 14.5h6.6" stroke="#33322e"/></g></svg>
<div class="tt" style="left:519px;top:10px;color:#dfdbd2">Meshalyzer Controls</div>
<div style="left:813px;top:0;width:1px;height:689px;background:linear-gradient(#f0a094 0px,#b87068 50px,#8a5a58 300px,#7a4a5a 500px,#6a3a55 689px)"></div>
<div class="up" style="left:462px;top:33px;width:350px;height:30px;"></div>
<div class="up" style="left:462px;top:63px;width:350px;height:620px;"></div>
<span class="t" style="left:471px;top:39px;font-size:14px;color:#000;letter-spacing:.3px;">File</span>
<span class="t" style="left:512px;top:39px;font-size:14px;color:#000;">Image</span>
<span class="t" style="left:573px;top:39px;font-size:14px;color:#000;">Data</span>
<span class="t" style="left:623px;top:39px;font-size:14px;color:#000;">Output</span>
<div class="clip" style="left:770px;top:36px;width:40px;height:24px"><span class="t" style="left:13px;top:3px">About</span></div>
<span class="t" style="left:478px;top:87px;font-size:14px;color:#000;">Data on</span>
<div class="dn" style="left:537px;top:83px;width:110px;height:24px;"></div>
<span class="t" style="left:542px;top:87px;font-size:14px;color:#000;">All</span>
<div class="up" style="left:626px;top:85px;width:19px;height:20px;"></div>
<svg class="a" style="left:631px;top:92px" width="11" height="6"><path d="M0 0H11L5.5 6z" fill="#000"/></svg>
<span class="t" style="left:688px;top:66px;font-size:14px;color:#000;">Display as:</span>
<div class="eng" style="left:652px;top:83px;width:150px;height:60px;"></div>
<span class="t" style="left:675px;top:92px;font-size:14px;color:#000;letter-spacing:.22px;">Surfaces</span>
<div class="clip" style="left:655px;top:112px;width:145px;height:28px"><span class="t" style="left:20px;top:5px;letter-spacing:.3px">Tetrahedral Mesh</span></div>
<svg class="a" style="left:0;top:0" width="814" height="200"><path d="M659.3 100.2L666.5 93L673.7 100.2z" fill="#9c9c9c"/><path d="M659.3 100.2L666.5 107.4L673.7 100.2z" fill="#ffffff"/><path d="M660.5 100.2L666.5 94.2L672.5 100.2L666.5 106.2z" fill="#000"/></svg>
<svg class="a" style="left:0;top:0" width="814" height="200"><path d="M659.3 125.2L666.5 118L673.7 125.2z" fill="#9c9c9c"/><path d="M659.3 125.2L666.5 132.4L673.7 125.2z" fill="#ffffff"/><path d="M660.5 125.2L666.5 119.2L672.5 125.2L666.5 131.2z" fill="#000"/><path d="M662.2 125.2L666.5 120.9L670.8 125.2L666.5 129.5z" fill="#dadada"/></svg>
<div class="up" style="left:471px;top:118px;width:81px;height:25px;"></div>
<div class="tdn" style="left:476px;top:124px;width:7px;height:13px;"></div>
<span class="t" style="left:488px;top:122px;font-size:14px;color:#000;letter-spacing:.3px;">Axes</span>
<div class="up" style="left:556px;top:118px;width:86px;height:25px;"></div>
<span class="t" style="left:563px;top:122px;font-size:14px;color:#000;letter-spacing:.4px;">Tet colour</span>
<div class="eng" style="left:472px;top:153px;width:330px;height:145px;"></div>
<span class="t" style="left:522px;top:161px;font-size:14px;color:#000;">Shell:</span>
<div class="dn" style="left:482px;top:178px;width:120px;height:30px;"></div>
<span class="t" style="left:487px;top:184px;font-size:14px;color:#000;">All</span>
<div class="up" style="left:580px;top:180px;width:20px;height:26px;"></div>
<svg class="a" style="left:585px;top:190px" width="11" height="6"><path d="M0 0H11L5.5 6z" fill="#000"/></svg>
<div class="up" style="left:482px;top:213px;width:120px;height:25px;"></div>
<div class="tdn" style="left:486px;top:219px;width:8px;height:13px;background:#00ff00"></div>
<span class="t" style="left:527px;top:217px;font-size:14px;color:#000;">visible</span>
<div class="eng" style="left:482px;top:244px;width:119px;height:23px;background:#000"></div>
<span class="t" style="left:515px;top:267px;font-size:14px;color:#000;">Opacity</span>
<div class="up" style="left:611px;top:163px;width:111px;height:25px;"></div>
<div class="tdn" style="left:615px;top:169px;width:8px;height:13px;background:#ffff00"></div>
<span class="t" style="left:628px;top:167px;font-size:14px;color:#000;letter-spacing:0.38px;">Vertices</span>
<div class="up" style="left:722px;top:163px;width:45px;height:25px;"></div>
<span class="t" style="left:726px;top:169px;font-size:12px;color:#000;">colour</span>
<div class="dn" style="left:767px;top:163px;width:25px;height:25px;"></div>
<span class="t" style="left:770.5px;top:167px;font-size:14px;color:#000;">1</span>
<div class="up" style="left:611px;top:188px;width:111px;height:25px;"></div>
<div class="tdn" style="left:615px;top:194px;width:8px;height:13px;background:#c0c0c0"></div>
<span class="t" style="left:628px;top:192px;font-size:14px;color:#000;letter-spacing:0.25px;">Cables</span>
<div class="up" style="left:722px;top:188px;width:45px;height:25px;"></div>
<span class="t" style="left:726px;top:194px;font-size:12px;color:#000;">colour</span>
<div class="dn" style="left:767px;top:188px;width:25px;height:25px;"></div>
<span class="t" style="left:770.5px;top:192px;font-size:14px;color:#000;">1</span>
<div class="up" style="left:611px;top:213px;width:111px;height:25px;"></div>
<div class="tdn" style="left:615px;top:219px;width:8px;height:13px;background:#c0c0c0"></div>
<span class="t" style="left:628px;top:217px;font-size:14px;color:#000;letter-spacing:0.16px;">Connections</span>
<div class="up" style="left:722px;top:213px;width:45px;height:25px;"></div>
<span class="t" style="left:726px;top:219px;font-size:12px;color:#000;">colour</span>
<div class="dn" style="left:767px;top:213px;width:25px;height:25px;"></div>
<span class="t" style="left:770.5px;top:217px;font-size:14px;color:#000;">1</span>
<div class="up" style="left:611px;top:238px;width:111px;height:25px;"></div>
<div class="tdn" style="left:615px;top:244px;width:8px;height:13px;background:#ffff00"></div>
<span class="t" style="left:628px;top:242px;font-size:14px;color:#000;letter-spacing:0.49px;">Triangles</span>
<div class="up" style="left:722px;top:238px;width:45px;height:25px;"></div>
<span class="t" style="left:726px;top:244px;font-size:12px;color:#000;">colour</span>
<div class="dn" style="left:767px;top:238px;width:25px;height:25px;"></div>
<span class="t" style="left:770.5px;top:242px;font-size:14px;color:#000;">1</span>
<div class="up" style="left:611px;top:263px;width:111px;height:25px;"></div>
<div class="tdn" style="left:615px;top:269px;width:8px;height:13px;background:#c0c0c0"></div>
<span class="t" style="left:628px;top:267px;font-size:14px;color:#000;letter-spacing:0.19px;">Surface</span>
<div class="up" style="left:722px;top:263px;width:45px;height:25px;"></div>
<span class="t" style="left:726px;top:269px;font-size:12px;color:#000;">colour</span>
<div class="dn" style="left:767px;top:263px;width:25px;height:25px;"></div>
<span class="t" style="left:770.5px;top:267px;font-size:14px;color:#000;">1</span>
<div style="left:614px;top:265px;width:105px;height:21px;border:1px dotted #000"></div>
<div class="tup" style="left:467px;top:328px;width:335px;height:190px;"></div>
<div style="left:468px;top:303px;width:74px;height:27px;background:#c0c0c0;box-shadow:inset 1px 1px 0 #f4f4f4,inset -1px 0 0 #4f4f4f"></div>
<span class="t" style="left:473.5px;top:310px;font-size:12px;color:#000;letter-spacing:.1px;font-weight:bold;">Highlight</span>
<div style="left:544px;top:305px;width:55px;height:23px;background:#c0c0c0;box-shadow:inset 1px 1px 0 #f4f4f4,inset -1px 0 0 #4f4f4f"></div>
<span class="t" style="left:549px;top:311px;font-size:12px;color:#d4d4d4;">Vectors</span>
<div style="left:601px;top:305px;width:47px;height:23px;background:#c0c0c0;box-shadow:inset 1px 1px 0 #f4f4f4,inset -1px 0 0 #4f4f4f"></div>
<span class="t" style="left:606px;top:311px;font-size:12px;color:#4a90c8;">Lights</span>
<div style="left:651px;top:305px;width:56px;height:23px;background:#c0c0c0;box-shadow:inset 1px 1px 0 #f4f4f4,inset -1px 0 0 #4f4f4f"></div>
<span class="t" style="left:655px;top:311px;font-size:12px;color:#20b020;">Regions</span>
<div class="up" style="left:562px;top:348px;width:85px;height:25px;"></div>
<div class="tdn" style="left:566px;top:354px;width:8px;height:13px;"></div>
<span class="t" style="left:578px;top:352px;font-size:14px;color:#000;">on</span>
<div class="up" style="left:652px;top:348px;width:85px;height:25px;"></div>
<span class="t" style="left:656px;top:355px;font-size:10px;color:#000;">current surface</span>
<div style="left:752px;top:348px;width:30px;height:25px;border-radius:12.5px;background:#ffb03b;border:1px solid #000;box-shadow:inset 1.5px 1.5px 0 #fff,inset -1.5px -1.5px 0 #777"></div>
<span class="t" style="left:763.5px;top:352px;font-size:14px;color:#000;">?</span>
<div class="dn" style="left:477px;top:378px;width:84px;height:24px;"></div>
<div class="clip" style="left:479px;top:380px;width:61px;height:20px"><span class="t" style="left:3px;top:2px;letter-spacing:.45px">Tetrahedra</span></div>
<div class="up" style="left:540px;top:380px;width:19px;height:20px;"></div>
<svg class="a" style="left:545px;top:388px" width="11" height="6"><path d="M0 0H11L5.5 6z" fill="#000"/></svg>
<div class="dn" style="left:562px;top:378px;width:85px;height:24px;"></div>
<span class="t" style="left:565.5px;top:382px;font-size:14px;color:#000;">0</span>
<div class="dn" style="left:652px;top:378px;width:85px;height:24px;"></div>
<span class="t" style="left:655.5px;top:382px;font-size:14px;color:#000;">0</span>
<div class="dn" style="left:562px;top:408px;width:85px;height:24px;"></div>
<span class="t" style="left:565.5px;top:412px;font-size:14px;color:#000;">0</span>
<div class="dn" style="left:652px;top:408px;width:85px;height:24px;"></div>
<span class="t" style="left:655.5px;top:412px;font-size:14px;color:#000;">0</span>
<div class="dn" style="left:562px;top:438px;width:85px;height:24px;"></div>
<span class="t" style="left:565.5px;top:442px;font-size:14px;color:#000;">0</span>
<div class="dn" style="left:652px;top:438px;width:85px;height:24px;background:#ffd980"></div>
<span class="t" style="left:655px;top:442px;font-size:14px;color:#000;">0</span>
<div class="clip" style="left:740px;top:380px;width:62px;height:22px"><span class="t" style="left:0px;top:2px;letter-spacing:.45px">:Triangle</span></div>
<span class="t" style="left:740px;top:412px;font-size:14px;color:#000;">:Cable</span>
<span class="t" style="left:740px;top:442px;font-size:14px;color:#000;">:value</span>
<span class="t" style="left:473px;top:412px;font-size:14px;color:#000;letter-spacing:.14px;">Connection:</span>
<span class="t" style="left:507px;top:442px;font-size:14px;color:#000;letter-spacing:.2px;">Vertex:</span>
<div class="tup" style="left:482px;top:468px;width:70px;height:25px;background:#ff6a3c;box-shadow:inset 1px 1px 0 #f4f4f4,inset -1px -1px 0 #000"></div>
<div class="clip" style="left:483px;top:469px;width:68px;height:22px"><span class="t" style="left:1px;top:5px;font-size:12px">Pick Vertex</span></div>
<div class="dn" style="left:562px;top:468px;width:100px;height:25px;"></div>
<span class="t" style="left:567px;top:472px;font-size:14px;color:#000;">triangles</span>
<div class="up" style="left:640px;top:470px;width:20px;height:21px;"></div>
<svg class="a" style="left:645px;top:478px" width="11" height="6"><path d="M0 0H11L5.5 6z" fill="#000"/></svg>
<div class="tup" style="left:672px;top:468px;width:105px;height:25px;background:#c0903c;box-shadow:inset 1px 1px 0 #f4f4f4,inset -1px -1px 0 #000"></div>
<span class="t" style="left:670px;top:472px;font-size:14px;color:#000;">plot time series</span>
<span class="t" style="left:580px;top:493px;font-size:14px;color:#000;">attached</span>
<div class="eng" style="left:472px;top:523px;width:330px;height:60px;"></div>
<div style="left:477px;top:528px;width:45px;height:20px;border-radius:10px;background:#c0c0c0;border:1px solid #000;box-shadow:inset 1.5px 1.5px 0 #fff,inset -1.5px -1.5px 0 #777"></div>
<span class="t" style="left:480.5px;top:532px;font-size:10px;color:#000;">optimal</span>
<div class="tup" style="left:477px;top:553px;width:45px;height:16px;box-shadow:inset 1px 1px 0 #f4f4f4,inset -1px -1px 0 #000,inset -2px -2px 0 #878787"></div>
<div class="tdn" style="left:481px;top:556px;width:6px;height:9px;"></div>
<span class="t" style="left:495.5px;top:555px;font-size:10px;color:#000;">auto</span>
<div class="dn" style="left:527px;top:533px;width:64px;height:24px;"></div>
<span class="t" style="left:530px;top:539px;font-size:12px;color:#000;">-83.853</span>
<div class="dn" style="left:592px;top:533px;width:64px;height:24px;"></div>
<span class="t" style="left:596px;top:539px;font-size:12px;color:#000;">0</span>
<div class="dn" style="left:657px;top:533px;width:30px;height:24px;"></div>
<span class="t" style="left:660px;top:539px;font-size:12px;color:#000;">64</span>
<div class="dn" style="left:692px;top:533px;width:104px;height:24px;"></div>
<div style="left:697px;top:538px;width:70px;height:15px;background:linear-gradient(90deg,#000 0%,#0000ff 18%,#00ffff 36%,#00ff00 50%,#ffff00 67%,#ff0000 84%,#ffc4c4 100%)"></div>
<div class="up" style="left:775px;top:535px;width:19px;height:20px;"></div>
<svg class="a" style="left:780px;top:542px" width="11" height="6"><path d="M0 0H11L5.5 6z" fill="#000"/></svg>
<span class="t" style="left:550px;top:559px;font-size:10px;color:#000;">min</span>
<span class="t" style="left:613px;top:559px;font-size:10px;color:#000;">max</span>
<span class="t" style="left:657px;top:559px;font-size:10px;color:#000;">levels</span>
<span class="t" style="left:714px;top:559px;font-size:10px;color:#000;">colour scale</span>
<div class="eng" style="left:472px;top:588px;width:330px;height:80px;"></div>
<span class="t" style="left:571px;top:586px;font-size:14px;color:#000;">time</span>
<div class="tdn" style="left:478px;top:604px;width:38px;height:23px;"></div>
<span class="t" style="left:480px;top:609px;font-size:12px;color:#000;">12</span>
<div class="tdn" style="left:517px;top:604px;width:180px;height:23px;"></div>
<div style="left:520px;top:613px;width:174px;height:3px;background:linear-gradient(#3a3a3a 1px,#000 1px);box-shadow:0 1px 0 #f4f4f4"></div>
<div class="up" style="left:616px;top:605px;width:15px;height:21px;"></div>
<div class="tdn" style="left:621px;top:607px;width:5px;height:17px;"></div>
<div class="up" style="left:707px;top:603px;width:40px;height:25px;"></div>
<div class="up" style="left:752px;top:603px;width:40px;height:25px;"></div>
<svg class="a" style="left:719px;top:608px" width="17" height="15"><path d="M0.5 0.5L8 7.5L0.5 14.5zM8.5 0.5L16 7.5L8.5 14.5z" fill="#30f000" stroke="#087800" stroke-width=".8"/></svg>
<div style="left:766px;top:608px;width:5px;height:15px;background:#ff0000"></div><div style="left:772px;top:608px;width:5px;height:15px;background:#ff0000"></div>
<span class="t" style="left:473px;top:639px;font-size:14px;color:#000;">#frames</span>
<div class="up" style="left:537px;top:638px;width:19px;height:19px;"></div>
<div class="up" style="left:556px;top:638px;width:19px;height:19px;"></div>
<div class="dn" style="left:575px;top:638px;width:53px;height:19px;"></div>
<div class="up" style="left:628px;top:638px;width:19px;height:19px;"></div>
<div class="up" style="left:647px;top:638px;width:19px;height:19px;"></div>
<span class="t" style="left:598px;top:639px;font-size:14px;color:#000;">1</span>
<svg class="a" style="left:537px;top:638px" width="130" height="19"><g fill="#000"><path d="M9 9.5L14 5V14zM4 9.5L9 5V14z"/><path d="M23 9.5L30 5V14z"/><path d="M107 9.5L100 5V14z"/><path d="M121 9.5L116 5V14zM126 9.5L121 5V14z" transform="translate(0,0)"/></g></svg>
<span class="t" style="left:675px;top:639px;font-size:14px;color:#000;">delay:</span>
<div class="dn" style="left:722px;top:638px;width:70px;height:19px;"></div>
<span class="t" style="left:725.5px;top:639px;font-size:14px;color:#000;">10</span></body></html>
